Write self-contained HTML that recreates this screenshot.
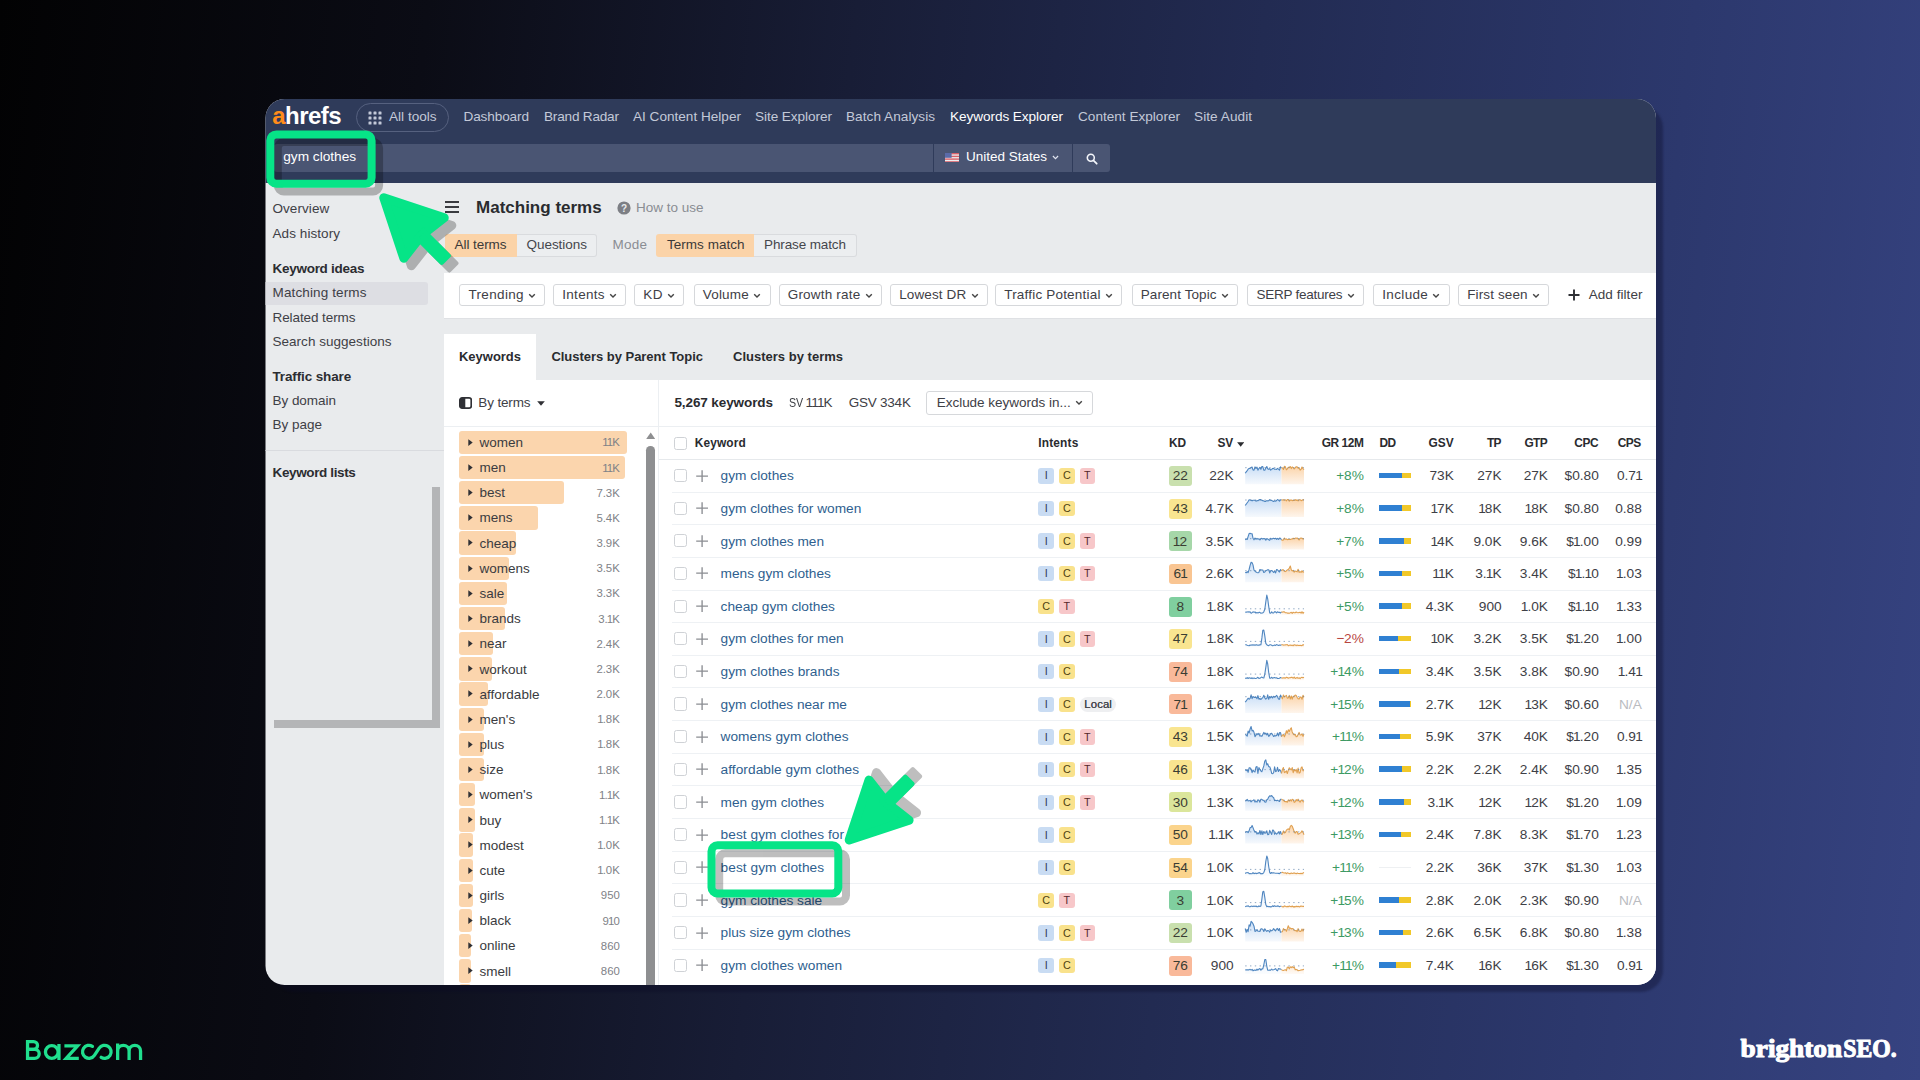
<!DOCTYPE html><html><head><meta charset="utf-8"><title>slide</title><style>
*{box-sizing:border-box;margin:0;padding:0}
html,body{width:1920px;height:1080px;overflow:hidden}
body{font-family:"Liberation Sans",sans-serif;position:relative;
 background:linear-gradient(96.5deg,#020203 0%,#0b0c15 21%,#181d36 42%,#222b52 62%,#2c386d 83%,#364381 100%);}
.abs{position:absolute}
#shadow{position:absolute;left:272px;top:106px;width:1391px;height:886px;border-radius:22px;background:rgba(8,10,35,.33);filter:blur(1.2px)}
#card{position:absolute;left:0;top:0;width:1920px;height:1080px;clip-path:inset(99px 264px 95px 265.5px round 19px);background:#e9ebed}
#hdr{position:absolute;left:265px;top:99px;width:1392px;height:84px;background:#2f3b5a}
.t{position:absolute;white-space:nowrap;line-height:1}
.nav{font-size:13.6px;color:#c3c9d8;top:110px}
.sb{font-size:13.5px;color:#3e4046;left:272.5px}
.o{margin:0 -0.95px 0 -0.85px}
.sbb{font-size:13.5px;color:#2c2d31;left:272.5px;font-weight:bold}
</style></head><body><div id="shadow"></div>
<div id="card">
<div id="hdr"></div>
<div class="t" style="letter-spacing:-0.549px;left:272.3px;top:104.3px;font-size:24px;font-weight:bold;color:#fff"><span style="color:#ff8c1a">a</span>hrefs</div>
<div class="abs" style="left:356px;top:103px;width:93px;height:28.5px;border:1px solid #56617f;border-radius:15px"></div>
<svg class="abs" style="left:368px;top:110.5px" width="14" height="14" viewBox="0 0 14 14" fill="#c3c9d8"><rect x="0.5" y="0.5" width="3" height="3" rx=".6"/><rect x="5.5" y="0.5" width="3" height="3" rx=".6"/><rect x="10.5" y="0.5" width="3" height="3" rx=".6"/><rect x="0.5" y="5.5" width="3" height="3" rx=".6"/><rect x="5.5" y="5.5" width="3" height="3" rx=".6"/><rect x="10.5" y="5.5" width="3" height="3" rx=".6"/><rect x="0.5" y="10.5" width="3" height="3" rx=".6"/><rect x="5.5" y="10.5" width="3" height="3" rx=".6"/><rect x="10.5" y="10.5" width="3" height="3" rx=".6"/></svg>
<div class="t nav" style="left:389px">All tools</div>
<div class="t nav" style="letter-spacing:-0.127px;left:463.5px;color:#c3c9d8">Dashboard</div>
<div class="t nav" style="letter-spacing:-0.208px;left:544px;color:#c3c9d8">Brand Radar</div>
<div class="t nav" style="letter-spacing:-0.004px;left:633px;color:#c3c9d8">AI Content Helper</div>
<div class="t nav" style="letter-spacing:-0.069px;left:755px;color:#c3c9d8">Site Explorer</div>
<div class="t nav" style="letter-spacing:0.046px;left:846px;color:#c3c9d8">Batch Analysis</div>
<div class="t nav" style="letter-spacing:-0.068px;left:950px;color:#fff">Keywords Explorer</div>
<div class="t nav" style="letter-spacing:-0.001px;left:1078px;color:#c3c9d8">Content Explorer</div>
<div class="t nav" style="letter-spacing:0.062px;left:1194px;color:#c3c9d8">Site Audit</div>
<div class="abs" style="left:274px;top:144px;width:659px;height:27.5px;background:#4a5573;border-radius:3px 0 0 3px"></div>
<div class="abs" style="left:934px;top:144px;width:138px;height:27.5px;background:#4a5573"></div>
<div class="abs" style="left:1073px;top:144px;width:37px;height:27.5px;background:#4a5573;border-radius:0 3px 3px 0"></div>
<div class="t" style="letter-spacing:-0.003px;left:283.2px;top:150px;font-size:13.7px;color:#fff">gym clothes</div>
<svg class="abs" style="left:945px;top:152.7px" width="14.2" height="9.6" viewBox="0 0 15 11" preserveAspectRatio="none"><rect width="15" height="11" fill="#eee"/><g fill="#d9606a"><rect y="0" width="15" height="1.6"/><rect y="3.1" width="15" height="1.6"/><rect y="6.2" width="15" height="1.6"/><rect y="9.4" width="15" height="1.6"/></g><rect width="7" height="5.5" fill="#5a6aa8"/></svg>
<div class="t" style="left:966px;top:150px;font-size:13.5px;color:#fff">United States</div>
<svg class="abs" style="left:1052px;top:155.3px" width="7" height="5.2" viewBox="0 0 8 6"><path d="M1 1.2 L4 4.2 L7 1.2" fill="none" stroke="#dfe3ee" stroke-width="1.4"/></svg>
<svg class="abs" style="left:1085.5px;top:152.8px" width="12" height="12" viewBox="0 0 13 13"><circle cx="5.2" cy="5.2" r="3.8" fill="none" stroke="#f3f5fa" stroke-width="1.7"/><path d="M8 8 L11.6 11.6" stroke="#f3f5fa" stroke-width="1.9" stroke-linecap="round"/></svg>
<div class="abs" style="left:265px;top:282px;width:163px;height:23px;background:#dddee3;border-radius:0 3px 3px 0"></div>
<div class="t sb" style="letter-spacing:0.062px;top:202.2px">Overview</div>
<div class="t sb" style="letter-spacing:0.072px;top:227.2px">Ads history</div>
<div class="t sbb" style="letter-spacing:-0.275px;top:261.7px">Keyword ideas</div>
<div class="t sb" style="letter-spacing:0.132px;top:286.2px">Matching terms</div>
<div class="t sb" style="letter-spacing:-0.087px;top:310.7px">Related terms</div>
<div class="t sb" style="letter-spacing:0.025px;top:334.7px">Search suggestions</div>
<div class="t sbb" style="letter-spacing:-0.133px;top:370.2px">Traffic share</div>
<div class="t sb" style="letter-spacing:-0.037px;top:394.2px">By domain</div>
<div class="t sb" style="letter-spacing:-0.008px;top:418.2px">By page</div>
<div class="t sbb" style="letter-spacing:-0.373px;top:466.2px">Keyword lists</div>
<div class="abs" style="left:265px;top:449.5px;width:179px;height:1px;background:#d9dbdf"></div>
<div class="abs" style="left:432px;top:487px;width:8px;height:241px;background:#b4b5b7"></div>
<div class="abs" style="left:274px;top:720px;width:166px;height:8px;background:#b4b5b7"></div>
<div class="abs" style="left:445.30px;top:201.40px;width:13.40px;height:2.00px;background:#3a3b40;"></div>
<div class="abs" style="left:445.30px;top:206.10px;width:13.40px;height:2.00px;background:#3a3b40;"></div>
<div class="abs" style="left:445.30px;top:210.80px;width:13.40px;height:2.00px;background:#3a3b40;"></div>
<div class="t" style="letter-spacing:0.005px;left:476.00px;top:199.31px;font-size:17px;color:#2a2b2f;font-weight:bold;">Matching terms</div>
<svg class="abs" style="left:617px;top:201px" width="14" height="14" viewBox="0 0 14 14"><circle cx="7" cy="7" r="6.6" fill="#7d7f85"/><text x="7" y="10.6" font-family="Liberation Sans" font-weight="bold" font-size="10" fill="#e9ebed" text-anchor="middle">?</text></svg>
<div class="t" style="letter-spacing:-0.005px;left:636.00px;top:200.87px;font-size:13.5px;color:#8a8d93;">How to use</div>
<div class="abs" style="left:444.80px;top:234.00px;width:72.40px;height:22.50px;background:#fbd3a8;border-radius:3px 0 0 3px"></div>
<div class="abs" style="left:517.00px;top:234.00px;width:80.00px;height:22.50px;background:#eceef0;border:1px solid #d9dbde;border-left:none;border-radius:0 3px 3px 0"></div>
<div class="t" style="letter-spacing:-0.064px;left:454.50px;top:237.87px;font-size:13.5px;color:#3c3a38;">All terms</div>
<div class="t" style="letter-spacing:-0.037px;left:526.50px;top:237.87px;font-size:13.5px;color:#44464c;">Questions</div>
<div class="t" style="letter-spacing:0.240px;left:612.50px;top:237.87px;font-size:13.5px;color:#8a8d93;">Mode</div>
<div class="abs" style="left:656.00px;top:234.00px;width:98.40px;height:22.50px;background:#fbd3a8;border-radius:3px 0 0 3px"></div>
<div class="abs" style="left:754.30px;top:234.00px;width:103.00px;height:22.50px;background:#eceef0;border:1px solid #d9dbde;border-left:none;border-radius:0 3px 3px 0"></div>
<div class="t" style="letter-spacing:0.023px;left:667.00px;top:237.87px;font-size:13.5px;color:#3c3a38;">Terms match</div>
<div class="t" style="letter-spacing:-0.118px;left:764.00px;top:237.87px;font-size:13.5px;color:#44464c;">Phrase match</div>
<div class="abs" style="left:443.60px;top:272.70px;width:1213.00px;height:46.30px;background:#ffffff;border-bottom:1px solid #dfe1e4"></div>
<div class="abs" style="left:459.20px;top:283.70px;width:86.20px;height:22.60px;background:#fff;border:1px solid #d6d8db;border-radius:3px"></div>
<div class="t" style="letter-spacing:0.346px;left:468.40px;top:288.17px;font-size:13.5px;color:#3e4046;">Trending</div>
<svg class="abs" style="left:528.1px;top:292.6px" width="8" height="6" viewBox="0 0 8 6"><path d="M1.2 1.3 L4 4.1 L6.8 1.3" fill="none" stroke="#444" stroke-width="1.4"/></svg>
<div class="abs" style="left:553.00px;top:283.70px;width:73.40px;height:22.60px;background:#fff;border:1px solid #d6d8db;border-radius:3px"></div>
<div class="t" style="letter-spacing:0.311px;left:562.20px;top:288.17px;font-size:13.5px;color:#3e4046;">Intents</div>
<svg class="abs" style="left:609.1px;top:292.6px" width="8" height="6" viewBox="0 0 8 6"><path d="M1.2 1.3 L4 4.1 L6.8 1.3" fill="none" stroke="#444" stroke-width="1.4"/></svg>
<div class="abs" style="left:634.00px;top:283.70px;width:50.40px;height:22.60px;background:#fff;border:1px solid #d6d8db;border-radius:3px"></div>
<div class="t" style="letter-spacing:0.634px;left:643.20px;top:288.17px;font-size:13.5px;color:#3e4046;">KD</div>
<svg class="abs" style="left:667.1px;top:292.6px" width="8" height="6" viewBox="0 0 8 6"><path d="M1.2 1.3 L4 4.1 L6.8 1.3" fill="none" stroke="#444" stroke-width="1.4"/></svg>
<div class="abs" style="left:693.50px;top:283.70px;width:77.10px;height:22.60px;background:#fff;border:1px solid #d6d8db;border-radius:3px"></div>
<div class="t" style="letter-spacing:0.214px;left:702.70px;top:288.17px;font-size:13.5px;color:#3e4046;">Volume</div>
<svg class="abs" style="left:753.3px;top:292.6px" width="8" height="6" viewBox="0 0 8 6"><path d="M1.2 1.3 L4 4.1 L6.8 1.3" fill="none" stroke="#444" stroke-width="1.4"/></svg>
<div class="abs" style="left:778.50px;top:283.70px;width:103.50px;height:22.60px;background:#fff;border:1px solid #d6d8db;border-radius:3px"></div>
<div class="t" style="letter-spacing:0.197px;left:787.70px;top:288.17px;font-size:13.5px;color:#3e4046;">Growth rate</div>
<svg class="abs" style="left:864.7px;top:292.6px" width="8" height="6" viewBox="0 0 8 6"><path d="M1.2 1.3 L4 4.1 L6.8 1.3" fill="none" stroke="#444" stroke-width="1.4"/></svg>
<div class="abs" style="left:890.00px;top:283.70px;width:98.00px;height:22.60px;background:#fff;border:1px solid #d6d8db;border-radius:3px"></div>
<div class="t" style="letter-spacing:0.121px;left:899.20px;top:288.17px;font-size:13.5px;color:#3e4046;">Lowest DR</div>
<svg class="abs" style="left:970.7px;top:292.6px" width="8" height="6" viewBox="0 0 8 6"><path d="M1.2 1.3 L4 4.1 L6.8 1.3" fill="none" stroke="#444" stroke-width="1.4"/></svg>
<div class="abs" style="left:995.00px;top:283.70px;width:127.20px;height:22.60px;background:#fff;border:1px solid #d6d8db;border-radius:3px"></div>
<div class="t" style="letter-spacing:0.197px;left:1004.20px;top:288.17px;font-size:13.5px;color:#3e4046;">Traffic Potential</div>
<svg class="abs" style="left:1104.9px;top:292.6px" width="8" height="6" viewBox="0 0 8 6"><path d="M1.2 1.3 L4 4.1 L6.8 1.3" fill="none" stroke="#444" stroke-width="1.4"/></svg>
<div class="abs" style="left:1131.50px;top:283.70px;width:106.90px;height:22.60px;background:#fff;border:1px solid #d6d8db;border-radius:3px"></div>
<div class="t" style="letter-spacing:0.099px;left:1140.70px;top:288.17px;font-size:13.5px;color:#3e4046;">Parent Topic</div>
<svg class="abs" style="left:1221.1px;top:292.6px" width="8" height="6" viewBox="0 0 8 6"><path d="M1.2 1.3 L4 4.1 L6.8 1.3" fill="none" stroke="#444" stroke-width="1.4"/></svg>
<div class="abs" style="left:1247.20px;top:283.70px;width:117.20px;height:22.60px;background:#fff;border:1px solid #d6d8db;border-radius:3px"></div>
<div class="t" style="letter-spacing:-0.239px;left:1256.40px;top:288.17px;font-size:13.5px;color:#3e4046;">SERP features</div>
<svg class="abs" style="left:1347.1px;top:292.6px" width="8" height="6" viewBox="0 0 8 6"><path d="M1.2 1.3 L4 4.1 L6.8 1.3" fill="none" stroke="#444" stroke-width="1.4"/></svg>
<div class="abs" style="left:1373.00px;top:283.70px;width:76.70px;height:22.60px;background:#fff;border:1px solid #d6d8db;border-radius:3px"></div>
<div class="t" style="letter-spacing:0.359px;left:1382.20px;top:288.17px;font-size:13.5px;color:#3e4046;">Include</div>
<svg class="abs" style="left:1432.4px;top:292.6px" width="8" height="6" viewBox="0 0 8 6"><path d="M1.2 1.3 L4 4.1 L6.8 1.3" fill="none" stroke="#444" stroke-width="1.4"/></svg>
<div class="abs" style="left:1458.00px;top:283.70px;width:91.40px;height:22.60px;background:#fff;border:1px solid #d6d8db;border-radius:3px"></div>
<div class="t" style="letter-spacing:0.124px;left:1467.20px;top:288.17px;font-size:13.5px;color:#3e4046;">First seen</div>
<svg class="abs" style="left:1532.1px;top:292.6px" width="8" height="6" viewBox="0 0 8 6"><path d="M1.2 1.3 L4 4.1 L6.8 1.3" fill="none" stroke="#444" stroke-width="1.4"/></svg>
<svg class="abs" style="left:1567.5px;top:289px" width="12" height="12" viewBox="0 0 12 12"><path d="M6 0.5V11.5M0.5 6H11.5" stroke="#2f3035" stroke-width="1.9"/></svg>
<div class="t" style="letter-spacing:0.058px;left:1588.70px;top:288.17px;font-size:13.5px;color:#3e4046;">Add filter</div>
<div class="abs" style="left:443.60px;top:333.80px;width:92.70px;height:46.00px;background:#ffffff;"></div>
<div class="t" style="letter-spacing:-0.020px;left:459.00px;top:349.60px;font-size:13.0px;color:#2a2b2f;font-weight:bold;">Keywords</div>
<div class="t" style="letter-spacing:-0.026px;left:551.40px;top:349.60px;font-size:13.0px;color:#2a2b2f;font-weight:bold;">Clusters by Parent Topic</div>
<div class="t" style="letter-spacing:0.011px;left:733.00px;top:349.60px;font-size:13.0px;color:#2a2b2f;font-weight:bold;">Clusters by terms</div>
<div class="abs" style="left:443.60px;top:379.50px;width:1213.00px;height:606.00px;background:#ffffff;"></div>
<div class="abs" style="left:443.60px;top:425.60px;width:1213.00px;height:1.00px;background:#eceff2;"></div>
<div class="abs" style="left:658.30px;top:379.50px;width:1.00px;height:606.00px;background:#eceff2;"></div>
<svg class="abs" style="left:458.6px;top:396.8px" width="13.2" height="12" viewBox="0 0 13.2 12"><rect x="0.9" y="0.9" width="11.4" height="10.2" rx="2.2" fill="#fff" stroke="#2f3035" stroke-width="1.8"/><path d="M1 2.2 Q1 1 2.2 1 H6.3 V11 H2.2 Q1 11 1 9.8Z" fill="#2f3035"/></svg>
<div class="t" style="letter-spacing:-0.138px;left:478.30px;top:395.77px;font-size:13.5px;color:#3e4046;">By terms</div>
<svg class="abs" style="left:536.6px;top:401px" width="8" height="5" viewBox="0 0 8 5"><path d="M0.2 0.3H7.8L4 4.8Z" fill="#2f3035"/></svg>
<div class="t" style="letter-spacing:-0.094px;left:674.40px;top:395.77px;font-size:13.5px;color:#2a2b2f;font-weight:bold;">5,267 keywords</div>
<div class="t" style="left:789.40px;top:395.77px;font-size:13.5px;color:#3e4046;transform:scaleX(.79);transform-origin:0 0">SV</div>
<div class="t" style="right:1087.40px;top:395.77px;font-size:13.5px;color:#3e4046;"><span class="o">1</span><span class="o">1</span><span class="o">1</span>K</div>
<div class="t" style="letter-spacing:-0.228px;left:848.70px;top:395.77px;font-size:13.5px;color:#3e4046;">GSV 334K</div>
<div class="abs" style="left:925.70px;top:391.30px;width:167.30px;height:23.70px;background:#fff;border:1px solid #d6d8db;border-radius:3px"></div>
<div class="t" style="letter-spacing:-0.015px;left:936.70px;top:395.77px;font-size:13.5px;color:#3e4046;">Exclude keywords in...</div>
<svg class="abs" style="left:1075.2px;top:400px" width="8" height="6" viewBox="0 0 8 6"><path d="M1.2 1.3 L4 4.1 L6.8 1.3" fill="none" stroke="#444" stroke-width="1.4"/></svg>
<div class="abs" style="left:459.00px;top:430.70px;width:168.20px;height:23.30px;background:#fbd5ad;border-radius:3px"></div>
<svg class="abs" style="left:468px;top:438.70px" width="5" height="7.2" viewBox="0 0 5 7.2"><path d="M0.3 0.2V7L4.7 3.6Z" fill="#2f3035"/></svg>
<div class="t" style="left:479.60px;top:435.97px;font-size:13.5px;color:#3a3b40;">women</div>
<div class="t" style="right:1300.20px;top:437.35px;font-size:11.4px;color:#808287;"><span class="o">1</span><span class="o">1</span>K</div>
<div class="abs" style="left:459.00px;top:455.87px;width:165.80px;height:23.30px;background:#fbd5ad;border-radius:3px"></div>
<svg class="abs" style="left:468px;top:463.87px" width="5" height="7.2" viewBox="0 0 5 7.2"><path d="M0.3 0.2V7L4.7 3.6Z" fill="#2f3035"/></svg>
<div class="t" style="left:479.60px;top:461.14px;font-size:13.5px;color:#3a3b40;">men</div>
<div class="t" style="right:1300.20px;top:462.52px;font-size:11.4px;color:#808287;"><span class="o">1</span><span class="o">1</span>K</div>
<div class="abs" style="left:459.00px;top:481.04px;width:105.30px;height:23.30px;background:#fbd5ad;border-radius:3px"></div>
<svg class="abs" style="left:468px;top:489.04px" width="5" height="7.2" viewBox="0 0 5 7.2"><path d="M0.3 0.2V7L4.7 3.6Z" fill="#2f3035"/></svg>
<div class="t" style="left:479.60px;top:486.31px;font-size:13.5px;color:#3a3b40;">best</div>
<div class="t" style="right:1300.20px;top:487.69px;font-size:11.4px;color:#808287;">7.3K</div>
<div class="abs" style="left:459.00px;top:506.21px;width:78.70px;height:23.30px;background:#fbd5ad;border-radius:3px"></div>
<svg class="abs" style="left:468px;top:514.21px" width="5" height="7.2" viewBox="0 0 5 7.2"><path d="M0.3 0.2V7L4.7 3.6Z" fill="#2f3035"/></svg>
<div class="t" style="left:479.60px;top:511.48px;font-size:13.5px;color:#3a3b40;">mens</div>
<div class="t" style="right:1300.20px;top:512.86px;font-size:11.4px;color:#808287;">5.4K</div>
<div class="abs" style="left:459.00px;top:531.38px;width:57.00px;height:23.30px;background:#fbd5ad;border-radius:3px"></div>
<svg class="abs" style="left:468px;top:539.38px" width="5" height="7.2" viewBox="0 0 5 7.2"><path d="M0.3 0.2V7L4.7 3.6Z" fill="#2f3035"/></svg>
<div class="t" style="left:479.60px;top:536.65px;font-size:13.5px;color:#3a3b40;">cheap</div>
<div class="t" style="right:1300.20px;top:538.03px;font-size:11.4px;color:#808287;">3.9K</div>
<div class="abs" style="left:459.00px;top:556.55px;width:50.30px;height:23.30px;background:#fbd5ad;border-radius:3px"></div>
<svg class="abs" style="left:468px;top:564.55px" width="5" height="7.2" viewBox="0 0 5 7.2"><path d="M0.3 0.2V7L4.7 3.6Z" fill="#2f3035"/></svg>
<div class="t" style="left:479.60px;top:561.82px;font-size:13.5px;color:#3a3b40;">womens</div>
<div class="t" style="right:1300.20px;top:563.20px;font-size:11.4px;color:#808287;">3.5K</div>
<div class="abs" style="left:459.00px;top:581.72px;width:48.30px;height:23.30px;background:#fbd5ad;border-radius:3px"></div>
<svg class="abs" style="left:468px;top:589.72px" width="5" height="7.2" viewBox="0 0 5 7.2"><path d="M0.3 0.2V7L4.7 3.6Z" fill="#2f3035"/></svg>
<div class="t" style="left:479.60px;top:586.99px;font-size:13.5px;color:#3a3b40;">sale</div>
<div class="t" style="right:1300.20px;top:588.37px;font-size:11.4px;color:#808287;">3.3K</div>
<div class="abs" style="left:459.00px;top:606.89px;width:46.00px;height:23.30px;background:#fbd5ad;border-radius:3px"></div>
<svg class="abs" style="left:468px;top:614.89px" width="5" height="7.2" viewBox="0 0 5 7.2"><path d="M0.3 0.2V7L4.7 3.6Z" fill="#2f3035"/></svg>
<div class="t" style="left:479.60px;top:612.16px;font-size:13.5px;color:#3a3b40;">brands</div>
<div class="t" style="right:1300.20px;top:613.54px;font-size:11.4px;color:#808287;">3.<span class="o">1</span>K</div>
<div class="abs" style="left:459.00px;top:632.06px;width:33.70px;height:23.30px;background:#fbd5ad;border-radius:3px"></div>
<svg class="abs" style="left:468px;top:640.06px" width="5" height="7.2" viewBox="0 0 5 7.2"><path d="M0.3 0.2V7L4.7 3.6Z" fill="#2f3035"/></svg>
<div class="t" style="left:479.60px;top:637.33px;font-size:13.5px;color:#3a3b40;">near</div>
<div class="t" style="right:1300.20px;top:638.71px;font-size:11.4px;color:#808287;">2.4K</div>
<div class="abs" style="left:459.00px;top:657.23px;width:32.70px;height:23.30px;background:#fbd5ad;border-radius:3px"></div>
<svg class="abs" style="left:468px;top:665.23px" width="5" height="7.2" viewBox="0 0 5 7.2"><path d="M0.3 0.2V7L4.7 3.6Z" fill="#2f3035"/></svg>
<div class="t" style="left:479.60px;top:662.50px;font-size:13.5px;color:#3a3b40;">workout</div>
<div class="t" style="right:1300.20px;top:663.88px;font-size:11.4px;color:#808287;">2.3K</div>
<div class="abs" style="left:459.00px;top:682.40px;width:29.30px;height:23.30px;background:#fbd5ad;border-radius:3px"></div>
<svg class="abs" style="left:468px;top:690.40px" width="5" height="7.2" viewBox="0 0 5 7.2"><path d="M0.3 0.2V7L4.7 3.6Z" fill="#2f3035"/></svg>
<div class="t" style="left:479.60px;top:687.67px;font-size:13.5px;color:#3a3b40;">affordable</div>
<div class="t" style="right:1300.20px;top:689.05px;font-size:11.4px;color:#808287;">2.0K</div>
<div class="abs" style="left:459.00px;top:707.57px;width:25.30px;height:23.30px;background:#fbd5ad;border-radius:3px"></div>
<svg class="abs" style="left:468px;top:715.57px" width="5" height="7.2" viewBox="0 0 5 7.2"><path d="M0.3 0.2V7L4.7 3.6Z" fill="#2f3035"/></svg>
<div class="t" style="left:479.60px;top:712.84px;font-size:13.5px;color:#3a3b40;">men's</div>
<div class="t" style="right:1300.20px;top:714.22px;font-size:11.4px;color:#808287;"><span class="o">1</span>.8K</div>
<div class="abs" style="left:459.00px;top:732.74px;width:25.30px;height:23.30px;background:#fbd5ad;border-radius:3px"></div>
<svg class="abs" style="left:468px;top:740.74px" width="5" height="7.2" viewBox="0 0 5 7.2"><path d="M0.3 0.2V7L4.7 3.6Z" fill="#2f3035"/></svg>
<div class="t" style="left:479.60px;top:738.01px;font-size:13.5px;color:#3a3b40;">plus</div>
<div class="t" style="right:1300.20px;top:739.39px;font-size:11.4px;color:#808287;"><span class="o">1</span>.8K</div>
<div class="abs" style="left:459.00px;top:757.91px;width:25.30px;height:23.30px;background:#fbd5ad;border-radius:3px"></div>
<svg class="abs" style="left:468px;top:765.91px" width="5" height="7.2" viewBox="0 0 5 7.2"><path d="M0.3 0.2V7L4.7 3.6Z" fill="#2f3035"/></svg>
<div class="t" style="left:479.60px;top:763.18px;font-size:13.5px;color:#3a3b40;">size</div>
<div class="t" style="right:1300.20px;top:764.56px;font-size:11.4px;color:#808287;"><span class="o">1</span>.8K</div>
<div class="abs" style="left:459.00px;top:783.08px;width:16.30px;height:23.30px;background:#fbd5ad;border-radius:3px"></div>
<svg class="abs" style="left:468px;top:791.08px" width="5" height="7.2" viewBox="0 0 5 7.2"><path d="M0.3 0.2V7L4.7 3.6Z" fill="#2f3035"/></svg>
<div class="t" style="left:479.60px;top:788.35px;font-size:13.5px;color:#3a3b40;">women's</div>
<div class="t" style="right:1300.20px;top:789.73px;font-size:11.4px;color:#808287;"><span class="o">1</span>.<span class="o">1</span>K</div>
<div class="abs" style="left:459.00px;top:808.25px;width:16.00px;height:23.30px;background:#fbd5ad;border-radius:3px"></div>
<svg class="abs" style="left:468px;top:816.25px" width="5" height="7.2" viewBox="0 0 5 7.2"><path d="M0.3 0.2V7L4.7 3.6Z" fill="#2f3035"/></svg>
<div class="t" style="left:479.60px;top:813.52px;font-size:13.5px;color:#3a3b40;">buy</div>
<div class="t" style="right:1300.20px;top:814.90px;font-size:11.4px;color:#808287;"><span class="o">1</span>.<span class="o">1</span>K</div>
<div class="abs" style="left:459.00px;top:833.42px;width:14.30px;height:23.30px;background:#fbd5ad;border-radius:3px"></div>
<svg class="abs" style="left:468px;top:841.42px" width="5" height="7.2" viewBox="0 0 5 7.2"><path d="M0.3 0.2V7L4.7 3.6Z" fill="#2f3035"/></svg>
<div class="t" style="left:479.60px;top:838.69px;font-size:13.5px;color:#3a3b40;">modest</div>
<div class="t" style="right:1300.20px;top:840.07px;font-size:11.4px;color:#808287;"><span class="o">1</span>.0K</div>
<div class="abs" style="left:459.00px;top:858.59px;width:14.30px;height:23.30px;background:#fbd5ad;border-radius:3px"></div>
<svg class="abs" style="left:468px;top:866.59px" width="5" height="7.2" viewBox="0 0 5 7.2"><path d="M0.3 0.2V7L4.7 3.6Z" fill="#2f3035"/></svg>
<div class="t" style="left:479.60px;top:863.86px;font-size:13.5px;color:#3a3b40;">cute</div>
<div class="t" style="right:1300.20px;top:865.24px;font-size:11.4px;color:#808287;"><span class="o">1</span>.0K</div>
<div class="abs" style="left:459.00px;top:883.76px;width:13.50px;height:23.30px;background:#fbd5ad;border-radius:3px"></div>
<svg class="abs" style="left:468px;top:891.76px" width="5" height="7.2" viewBox="0 0 5 7.2"><path d="M0.3 0.2V7L4.7 3.6Z" fill="#2f3035"/></svg>
<div class="t" style="left:479.60px;top:889.03px;font-size:13.5px;color:#3a3b40;">girls</div>
<div class="t" style="right:1300.20px;top:890.41px;font-size:11.4px;color:#808287;">950</div>
<div class="abs" style="left:459.00px;top:908.93px;width:13.00px;height:23.30px;background:#fbd5ad;border-radius:3px"></div>
<svg class="abs" style="left:468px;top:916.93px" width="5" height="7.2" viewBox="0 0 5 7.2"><path d="M0.3 0.2V7L4.7 3.6Z" fill="#2f3035"/></svg>
<div class="t" style="left:479.60px;top:914.20px;font-size:13.5px;color:#3a3b40;">black</div>
<div class="t" style="right:1300.20px;top:915.58px;font-size:11.4px;color:#808287;">9<span class="o">1</span>0</div>
<div class="abs" style="left:459.00px;top:934.10px;width:12.00px;height:23.30px;background:#fbd5ad;border-radius:3px"></div>
<svg class="abs" style="left:468px;top:942.10px" width="5" height="7.2" viewBox="0 0 5 7.2"><path d="M0.3 0.2V7L4.7 3.6Z" fill="#2f3035"/></svg>
<div class="t" style="left:479.60px;top:939.37px;font-size:13.5px;color:#3a3b40;">online</div>
<div class="t" style="right:1300.20px;top:940.75px;font-size:11.4px;color:#808287;">860</div>
<div class="abs" style="left:459.00px;top:959.27px;width:12.00px;height:23.30px;background:#fbd5ad;border-radius:3px"></div>
<svg class="abs" style="left:468px;top:967.27px" width="5" height="7.2" viewBox="0 0 5 7.2"><path d="M0.3 0.2V7L4.7 3.6Z" fill="#2f3035"/></svg>
<div class="t" style="left:479.60px;top:964.54px;font-size:13.5px;color:#3a3b40;">smell</div>
<div class="t" style="right:1300.20px;top:965.92px;font-size:11.4px;color:#808287;">860</div>
<div class="abs" style="left:459.00px;top:984.44px;width:11.50px;height:23.30px;background:#fbd5ad;border-radius:3px"></div>
<svg class="abs" style="left:645.6px;top:432.4px" width="9.4" height="7.2" viewBox="0 0 9.4 7.2"><path d="M4.7 0.4L9.2 7H0.2Z" fill="#8e8f91"/></svg>
<div class="abs" style="left:646.20px;top:446.00px;width:8.60px;height:545.00px;background:#8e8f91;border-radius:4.3px"></div>
<div class="abs" style="left:673.80px;top:437.00px;width:13.20px;height:13.20px;background:#fff;border:1px solid #cfd2d6;border-radius:2.5px"></div>
<div class="t" style="letter-spacing:0.130px;left:694.70px;top:437.93px;font-size:11.9px;color:#2a2b2f;font-weight:bold;">Keyword</div>
<div class="t" style="letter-spacing:0.169px;left:1038.30px;top:437.93px;font-size:11.9px;color:#2a2b2f;font-weight:bold;">Intents</div>
<div class="t" style="letter-spacing:0.012px;left:1168.90px;top:437.93px;font-size:11.9px;color:#2a2b2f;font-weight:bold;">KD</div>
<div class="t" style="letter-spacing:-0.075px;left:1217.50px;top:437.93px;font-size:11.9px;color:#2a2b2f;font-weight:bold;">SV</div>
<svg class="abs" style="left:1236.6px;top:442px" width="7.4" height="5" viewBox="0 0 7.4 5"><path d="M0.1 0.2H7.3L3.7 4.8Z" fill="#2a2b2f"/></svg>
<div class="t" style="letter-spacing:-0.416px;left:1321.70px;top:437.93px;font-size:11.9px;color:#2a2b2f;font-weight:bold;">GR 12M</div>
<div class="t" style="letter-spacing:-0.488px;left:1379.40px;top:437.93px;font-size:11.9px;color:#2a2b2f;font-weight:bold;">DD</div>
<div class="t" style="letter-spacing:-0.062px;left:1428.60px;top:437.93px;font-size:11.9px;color:#2a2b2f;font-weight:bold;">GSV</div>
<div class="t" style="letter-spacing:-0.803px;left:1487.00px;top:437.93px;font-size:11.9px;color:#2a2b2f;font-weight:bold;">TP</div>
<div class="t" style="letter-spacing:-0.527px;left:1524.40px;top:437.93px;font-size:11.9px;color:#2a2b2f;font-weight:bold;">GTP</div>
<div class="t" style="letter-spacing:-0.355px;left:1574.20px;top:437.93px;font-size:11.9px;color:#2a2b2f;font-weight:bold;">CPC</div>
<div class="t" style="letter-spacing:-0.577px;left:1617.80px;top:437.93px;font-size:11.9px;color:#2a2b2f;font-weight:bold;">CPS</div>
<div class="abs" style="left:659.00px;top:458.90px;width:997.00px;height:1.00px;background:#e6e9ec;"></div>
<svg width="0" height="0" style="position:absolute"><defs><linearGradient id="gb" x1="0" y1="0" x2="0" y2="1"><stop offset="0" stop-color="#c9def6"/><stop offset="1" stop-color="#f6f9fd"/></linearGradient><linearGradient id="go" x1="0" y1="0" x2="0" y2="1"><stop offset="0" stop-color="#fbd4aa"/><stop offset="1" stop-color="#fef5ec"/></linearGradient></defs></svg>
<div class="abs" style="left:672.00px;top:491.55px;width:984.00px;height:1.00px;background:#eef1f4;"></div>
<div class="abs" style="left:673.80px;top:468.92px;width:13.20px;height:13.20px;background:#fff;border:1px solid #cfd2d6;border-radius:2.5px"></div>
<svg class="abs" style="left:696.3px;top:469.52px" width="12.2" height="12.2" viewBox="0 0 12.2 12.2"><path d="M6.1 0.2V12M0.2 6.1H12" stroke="#8b8d92" stroke-width="1.35"/></svg>
<div class="t" style="letter-spacing:0.017px;left:720.60px;top:469.23px;font-size:13.7px;color:#2f5f8f;">gym clothes</div>
<div class="abs" style="left:1038.30px;top:468.12px;width:15.80px;height:15.40px;background:#c9dcf3;border-radius:3px"></div>
<div class="t" style="left:1038.30px;width:15.8px;text-align:center;top:470.42px;font-size:10.8px;color:#2f3b52">I</div>
<div class="abs" style="left:1058.90px;top:468.12px;width:15.80px;height:15.40px;background:#f9e28c;border-radius:3px"></div>
<div class="t" style="left:1058.90px;width:15.8px;text-align:center;top:470.42px;font-size:10.8px;color:#4f4210">C</div>
<div class="abs" style="left:1079.50px;top:468.12px;width:15.80px;height:15.40px;background:#f7c7c9;border-radius:3px"></div>
<div class="t" style="left:1079.50px;width:15.8px;text-align:center;top:470.42px;font-size:10.8px;color:#55282b">T</div>
<div class="abs" style="left:1168.90px;top:465.92px;width:22.80px;height:20.00px;background:#c9e0ae;border-radius:3px"></div>
<div class="t" style="left:1168.9px;width:22.8px;text-align:center;top:469.23px;font-size:13.7px;color:#3a3d33">22</div>
<div class="t" style="right:686.40px;top:469.23px;font-size:13.7px;color:#3e4046;">22K</div>
<svg class="abs" style="left:0;top:0;overflow:visible" width="1" height="1"><path d="M1245.2 473.3 L1246.2 471.9 L1247.2 470.6 L1248.1 469.2 L1249.1 468.3 L1250.1 468.4 L1251.1 467.6 L1252.1 467.1 L1253.0 469.9 L1254.0 470.1 L1255.0 466.9 L1256.0 468.5 L1257.0 467.2 L1257.9 470.2 L1258.9 468.5 L1259.9 467.4 L1260.9 469.3 L1261.9 466.5 L1262.8 466.6 L1263.8 470.1 L1264.8 470.2 L1265.8 468.1 L1266.8 466.5 L1267.7 468.7 L1268.7 469.4 L1269.7 468.6 L1270.7 470.1 L1271.7 469.4 L1272.6 468.5 L1273.6 468.3 L1274.6 469.3 L1275.6 469.3 L1276.6 469.4 L1277.5 468.4 L1278.5 469.1 L1279.5 470.2 L1280.5 466.9 L1281.5 468.0 L1281.5 484.3 L1245.2 484.3Z" fill="url(#gb)" opacity="1"/><path d="M1281.5 468.0 L1282.4 467.7 L1283.4 469.5 L1284.4 466.3 L1285.4 466.8 L1286.4 469.8 L1287.3 468.9 L1288.3 467.4 L1289.3 467.4 L1290.3 466.5 L1291.3 468.6 L1292.2 466.9 L1293.2 467.6 L1294.2 469.0 L1295.2 467.9 L1296.2 466.7 L1297.1 466.9 L1298.1 468.2 L1299.1 467.9 L1300.1 470.1 L1301.1 469.3 L1302.0 467.0 L1303.0 468.6 L1304.0 469.6 L1304.0 484.3 L1281.5 484.3Z" fill="url(#go)" opacity="1"/><path d="M1245.2 473.3 L1246.2 471.9 L1247.2 470.6 L1248.1 469.2 L1249.1 468.3 L1250.1 468.4 L1251.1 467.6 L1252.1 467.1 L1253.0 469.9 L1254.0 470.1 L1255.0 466.9 L1256.0 468.5 L1257.0 467.2 L1257.9 470.2 L1258.9 468.5 L1259.9 467.4 L1260.9 469.3 L1261.9 466.5 L1262.8 466.6 L1263.8 470.1 L1264.8 470.2 L1265.8 468.1 L1266.8 466.5 L1267.7 468.7 L1268.7 469.4 L1269.7 468.6 L1270.7 470.1 L1271.7 469.4 L1272.6 468.5 L1273.6 468.3 L1274.6 469.3 L1275.6 469.3 L1276.6 469.4 L1277.5 468.4 L1278.5 469.1 L1279.5 470.2 L1280.5 466.9 L1281.5 468.0" fill="none" stroke="#4f86c0" stroke-width="1.1" stroke-linejoin="round"/><path d="M1281.5 468.0 L1282.4 467.7 L1283.4 469.5 L1284.4 466.3 L1285.4 466.8 L1286.4 469.8 L1287.3 468.9 L1288.3 467.4 L1289.3 467.4 L1290.3 466.5 L1291.3 468.6 L1292.2 466.9 L1293.2 467.6 L1294.2 469.0 L1295.2 467.9 L1296.2 466.7 L1297.1 466.9 L1298.1 468.2 L1299.1 467.9 L1300.1 470.1 L1301.1 469.3 L1302.0 467.0 L1303.0 468.6 L1304.0 469.6" fill="none" stroke="#e0a050" stroke-width="1.1" stroke-linejoin="round"/><path d="M1245.2 467.7H1304.0" stroke="#5b7fa8" stroke-width="0.9" stroke-dasharray="1.4 3.4" opacity=".75"/></svg>
<div class="t" style="right:556.10px;top:469.23px;font-size:13.7px;color:#3d9a63;">+8%</div>
<div class="abs" style="left:1379.40px;top:472.62px;width:23.04px;height:5.60px;background:#2f80d2;"></div>
<div class="abs" style="left:1402.44px;top:472.62px;width:8.96px;height:5.60px;background:#f1c829;"></div>
<div class="t" style="right:466.20px;top:469.23px;font-size:13.7px;color:#3e4046;">73K</div>
<div class="t" style="right:418.40px;top:469.23px;font-size:13.7px;color:#3e4046;">27K</div>
<div class="t" style="right:372.00px;top:469.23px;font-size:13.7px;color:#3e4046;">27K</div>
<div class="t" style="right:321.20px;top:469.23px;font-size:13.7px;color:#3e4046;">$0.80</div>
<div class="t" style="right:278.20px;top:469.23px;font-size:13.7px;color:#3e4046;">0.7<span class="o">1</span></div>
<div class="abs" style="left:672.00px;top:524.20px;width:984.00px;height:1.00px;background:#eef1f4;"></div>
<div class="abs" style="left:673.80px;top:501.57px;width:13.20px;height:13.20px;background:#fff;border:1px solid #cfd2d6;border-radius:2.5px"></div>
<svg class="abs" style="left:696.3px;top:502.18px" width="12.2" height="12.2" viewBox="0 0 12.2 12.2"><path d="M6.1 0.2V12M0.2 6.1H12" stroke="#8b8d92" stroke-width="1.35"/></svg>
<div class="t" style="letter-spacing:-0.002px;left:720.60px;top:501.88px;font-size:13.7px;color:#2f5f8f;">gym clothes for women</div>
<div class="abs" style="left:1038.30px;top:500.77px;width:15.80px;height:15.40px;background:#c9dcf3;border-radius:3px"></div>
<div class="t" style="left:1038.30px;width:15.8px;text-align:center;top:503.07px;font-size:10.8px;color:#2f3b52">I</div>
<div class="abs" style="left:1058.90px;top:500.77px;width:15.80px;height:15.40px;background:#f9e28c;border-radius:3px"></div>
<div class="t" style="left:1058.90px;width:15.8px;text-align:center;top:503.07px;font-size:10.8px;color:#4f4210">C</div>
<div class="abs" style="left:1168.90px;top:498.57px;width:22.80px;height:20.00px;background:#f9e590;border-radius:3px"></div>
<div class="t" style="left:1168.9px;width:22.8px;text-align:center;top:501.88px;font-size:13.7px;color:#3a3d33">43</div>
<div class="t" style="right:686.40px;top:501.88px;font-size:13.7px;color:#3e4046;">4.7K</div>
<svg class="abs" style="left:0;top:0;overflow:visible" width="1" height="1"><path d="M1245.2 505.5 L1246.2 504.2 L1247.2 502.8 L1248.1 501.5 L1249.1 499.8 L1250.1 500.0 L1251.1 500.2 L1252.1 500.9 L1253.0 500.3 L1254.0 500.3 L1255.0 500.3 L1256.0 501.2 L1257.0 500.6 L1257.9 500.7 L1258.9 500.0 L1259.9 499.5 L1260.9 499.6 L1261.9 500.4 L1262.8 500.6 L1263.8 501.0 L1264.8 501.4 L1265.8 501.4 L1266.8 500.6 L1267.7 500.9 L1268.7 500.7 L1269.7 499.7 L1270.7 500.4 L1271.7 500.4 L1272.6 501.0 L1273.6 501.5 L1274.6 500.8 L1275.6 501.2 L1276.6 500.5 L1277.5 499.5 L1278.5 500.1 L1279.5 501.1 L1280.5 499.7 L1281.5 499.9 L1281.5 517.0 L1245.2 517.0Z" fill="url(#gb)" opacity="1"/><path d="M1281.5 499.9 L1282.4 500.0 L1283.4 499.7 L1284.4 500.0 L1285.4 499.9 L1286.4 500.8 L1287.3 499.5 L1288.3 499.6 L1289.3 501.2 L1290.3 500.0 L1291.3 500.1 L1292.2 500.6 L1293.2 500.4 L1294.2 500.5 L1295.2 499.6 L1296.2 500.5 L1297.1 499.8 L1298.1 500.8 L1299.1 499.7 L1300.1 499.7 L1301.1 500.6 L1302.0 500.4 L1303.0 499.6 L1304.0 500.0 L1304.0 517.0 L1281.5 517.0Z" fill="url(#go)" opacity="1"/><path d="M1245.2 505.5 L1246.2 504.2 L1247.2 502.8 L1248.1 501.5 L1249.1 499.8 L1250.1 500.0 L1251.1 500.2 L1252.1 500.9 L1253.0 500.3 L1254.0 500.3 L1255.0 500.3 L1256.0 501.2 L1257.0 500.6 L1257.9 500.7 L1258.9 500.0 L1259.9 499.5 L1260.9 499.6 L1261.9 500.4 L1262.8 500.6 L1263.8 501.0 L1264.8 501.4 L1265.8 501.4 L1266.8 500.6 L1267.7 500.9 L1268.7 500.7 L1269.7 499.7 L1270.7 500.4 L1271.7 500.4 L1272.6 501.0 L1273.6 501.5 L1274.6 500.8 L1275.6 501.2 L1276.6 500.5 L1277.5 499.5 L1278.5 500.1 L1279.5 501.1 L1280.5 499.7 L1281.5 499.9" fill="none" stroke="#4f86c0" stroke-width="1.1" stroke-linejoin="round"/><path d="M1281.5 499.9 L1282.4 500.0 L1283.4 499.7 L1284.4 500.0 L1285.4 499.9 L1286.4 500.8 L1287.3 499.5 L1288.3 499.6 L1289.3 501.2 L1290.3 500.0 L1291.3 500.1 L1292.2 500.6 L1293.2 500.4 L1294.2 500.5 L1295.2 499.6 L1296.2 500.5 L1297.1 499.8 L1298.1 500.8 L1299.1 499.7 L1300.1 499.7 L1301.1 500.6 L1302.0 500.4 L1303.0 499.6 L1304.0 500.0" fill="none" stroke="#e0a050" stroke-width="1.1" stroke-linejoin="round"/><path d="M1245.2 500.0H1304.0" stroke="#5b7fa8" stroke-width="0.9" stroke-dasharray="1.4 3.4" opacity=".75"/></svg>
<div class="t" style="right:556.10px;top:501.88px;font-size:13.7px;color:#3d9a63;">+8%</div>
<div class="abs" style="left:1379.40px;top:505.27px;width:22.40px;height:5.60px;background:#2f80d2;"></div>
<div class="abs" style="left:1401.80px;top:505.27px;width:9.60px;height:5.60px;background:#f1c829;"></div>
<div class="t" style="right:466.20px;top:501.88px;font-size:13.7px;color:#3e4046;"><span class="o">1</span>7K</div>
<div class="t" style="right:418.40px;top:501.88px;font-size:13.7px;color:#3e4046;"><span class="o">1</span>8K</div>
<div class="t" style="right:372.00px;top:501.88px;font-size:13.7px;color:#3e4046;"><span class="o">1</span>8K</div>
<div class="t" style="right:321.20px;top:501.88px;font-size:13.7px;color:#3e4046;">$0.80</div>
<div class="t" style="right:278.20px;top:501.88px;font-size:13.7px;color:#3e4046;">0.88</div>
<div class="abs" style="left:672.00px;top:556.85px;width:984.00px;height:1.00px;background:#eef1f4;"></div>
<div class="abs" style="left:673.80px;top:534.23px;width:13.20px;height:13.20px;background:#fff;border:1px solid #cfd2d6;border-radius:2.5px"></div>
<svg class="abs" style="left:696.3px;top:534.82px" width="12.2" height="12.2" viewBox="0 0 12.2 12.2"><path d="M6.1 0.2V12M0.2 6.1H12" stroke="#8b8d92" stroke-width="1.35"/></svg>
<div class="t" style="letter-spacing:0.002px;left:720.60px;top:534.53px;font-size:13.7px;color:#2f5f8f;">gym clothes men</div>
<div class="abs" style="left:1038.30px;top:533.42px;width:15.80px;height:15.40px;background:#c9dcf3;border-radius:3px"></div>
<div class="t" style="left:1038.30px;width:15.8px;text-align:center;top:535.73px;font-size:10.8px;color:#2f3b52">I</div>
<div class="abs" style="left:1058.90px;top:533.42px;width:15.80px;height:15.40px;background:#f9e28c;border-radius:3px"></div>
<div class="t" style="left:1058.90px;width:15.8px;text-align:center;top:535.73px;font-size:10.8px;color:#4f4210">C</div>
<div class="abs" style="left:1079.50px;top:533.42px;width:15.80px;height:15.40px;background:#f7c7c9;border-radius:3px"></div>
<div class="t" style="left:1079.50px;width:15.8px;text-align:center;top:535.73px;font-size:10.8px;color:#55282b">T</div>
<div class="abs" style="left:1168.90px;top:531.23px;width:22.80px;height:20.00px;background:#a6d7a9;border-radius:3px"></div>
<div class="t" style="left:1168.9px;width:22.8px;text-align:center;top:534.53px;font-size:13.7px;color:#3a3d33"><span class="o">1</span>2</div>
<div class="t" style="right:686.40px;top:534.53px;font-size:13.7px;color:#3e4046;">3.5K</div>
<svg class="abs" style="left:0;top:0;overflow:visible" width="1" height="1"><path d="M1245.2 539.8 L1246.2 539.1 L1247.2 539.5 L1248.1 536.7 L1249.1 533.6 L1250.1 533.3 L1251.1 533.7 L1252.1 533.7 L1253.0 538.3 L1254.0 539.8 L1255.0 538.0 L1256.0 539.2 L1257.0 538.4 L1257.9 539.2 L1258.9 538.8 L1259.9 540.0 L1260.9 538.8 L1261.9 538.3 L1262.8 539.1 L1263.8 538.6 L1264.8 538.8 L1265.8 540.2 L1266.8 538.6 L1267.7 539.0 L1268.7 539.7 L1269.7 540.3 L1270.7 538.3 L1271.7 539.2 L1272.6 538.6 L1273.6 538.3 L1274.6 538.7 L1275.6 538.2 L1276.6 539.4 L1277.5 538.4 L1278.5 539.3 L1279.5 538.1 L1280.5 538.3 L1281.5 540.1 L1281.5 549.6 L1245.2 549.6Z" fill="url(#gb)" opacity="1"/><path d="M1281.5 540.1 L1282.4 540.1 L1283.4 539.9 L1284.4 538.1 L1285.4 539.3 L1286.4 538.9 L1287.3 539.7 L1288.3 539.2 L1289.3 539.4 L1290.3 539.5 L1291.3 539.0 L1292.2 539.0 L1293.2 538.2 L1294.2 538.7 L1295.2 538.1 L1296.2 538.3 L1297.1 538.0 L1298.1 538.8 L1299.1 540.0 L1300.1 538.3 L1301.1 538.1 L1302.0 538.2 L1303.0 539.0 L1304.0 538.7 L1304.0 549.6 L1281.5 549.6Z" fill="url(#go)" opacity="1"/><path d="M1245.2 539.8 L1246.2 539.1 L1247.2 539.5 L1248.1 536.7 L1249.1 533.6 L1250.1 533.3 L1251.1 533.7 L1252.1 533.7 L1253.0 538.3 L1254.0 539.8 L1255.0 538.0 L1256.0 539.2 L1257.0 538.4 L1257.9 539.2 L1258.9 538.8 L1259.9 540.0 L1260.9 538.8 L1261.9 538.3 L1262.8 539.1 L1263.8 538.6 L1264.8 538.8 L1265.8 540.2 L1266.8 538.6 L1267.7 539.0 L1268.7 539.7 L1269.7 540.3 L1270.7 538.3 L1271.7 539.2 L1272.6 538.6 L1273.6 538.3 L1274.6 538.7 L1275.6 538.2 L1276.6 539.4 L1277.5 538.4 L1278.5 539.3 L1279.5 538.1 L1280.5 538.3 L1281.5 540.1" fill="none" stroke="#4f86c0" stroke-width="1.1" stroke-linejoin="round"/><path d="M1281.5 540.1 L1282.4 540.1 L1283.4 539.9 L1284.4 538.1 L1285.4 539.3 L1286.4 538.9 L1287.3 539.7 L1288.3 539.2 L1289.3 539.4 L1290.3 539.5 L1291.3 539.0 L1292.2 539.0 L1293.2 538.2 L1294.2 538.7 L1295.2 538.1 L1296.2 538.3 L1297.1 538.0 L1298.1 538.8 L1299.1 540.0 L1300.1 538.3 L1301.1 538.1 L1302.0 538.2 L1303.0 539.0 L1304.0 538.7" fill="none" stroke="#e0a050" stroke-width="1.1" stroke-linejoin="round"/><path d="M1245.2 538.7H1304.0" stroke="#5b7fa8" stroke-width="0.9" stroke-dasharray="1.4 3.4" opacity=".75"/></svg>
<div class="t" style="right:556.10px;top:534.53px;font-size:13.7px;color:#3d9a63;">+7%</div>
<div class="abs" style="left:1379.40px;top:537.92px;width:24.96px;height:5.60px;background:#2f80d2;"></div>
<div class="abs" style="left:1404.36px;top:537.92px;width:7.04px;height:5.60px;background:#f1c829;"></div>
<div class="t" style="right:466.20px;top:534.53px;font-size:13.7px;color:#3e4046;"><span class="o">1</span>4K</div>
<div class="t" style="right:418.40px;top:534.53px;font-size:13.7px;color:#3e4046;">9.0K</div>
<div class="t" style="right:372.00px;top:534.53px;font-size:13.7px;color:#3e4046;">9.6K</div>
<div class="t" style="right:321.20px;top:534.53px;font-size:13.7px;color:#3e4046;">$<span class="o">1</span>.00</div>
<div class="t" style="right:278.20px;top:534.53px;font-size:13.7px;color:#3e4046;">0.99</div>
<div class="abs" style="left:672.00px;top:589.50px;width:984.00px;height:1.00px;background:#eef1f4;"></div>
<div class="abs" style="left:673.80px;top:566.88px;width:13.20px;height:13.20px;background:#fff;border:1px solid #cfd2d6;border-radius:2.5px"></div>
<svg class="abs" style="left:696.3px;top:567.47px" width="12.2" height="12.2" viewBox="0 0 12.2 12.2"><path d="M6.1 0.2V12M0.2 6.1H12" stroke="#8b8d92" stroke-width="1.35"/></svg>
<div class="t" style="letter-spacing:-0.001px;left:720.60px;top:567.18px;font-size:13.7px;color:#2f5f8f;">mens gym clothes</div>
<div class="abs" style="left:1038.30px;top:566.07px;width:15.80px;height:15.40px;background:#c9dcf3;border-radius:3px"></div>
<div class="t" style="left:1038.30px;width:15.8px;text-align:center;top:568.38px;font-size:10.8px;color:#2f3b52">I</div>
<div class="abs" style="left:1058.90px;top:566.07px;width:15.80px;height:15.40px;background:#f9e28c;border-radius:3px"></div>
<div class="t" style="left:1058.90px;width:15.8px;text-align:center;top:568.38px;font-size:10.8px;color:#4f4210">C</div>
<div class="abs" style="left:1079.50px;top:566.07px;width:15.80px;height:15.40px;background:#f7c7c9;border-radius:3px"></div>
<div class="t" style="left:1079.50px;width:15.8px;text-align:center;top:568.38px;font-size:10.8px;color:#55282b">T</div>
<div class="abs" style="left:1168.90px;top:563.88px;width:22.80px;height:20.00px;background:#f9c592;border-radius:3px"></div>
<div class="t" style="left:1168.9px;width:22.8px;text-align:center;top:567.18px;font-size:13.7px;color:#3a3d33">6<span class="o">1</span></div>
<div class="t" style="right:686.40px;top:567.18px;font-size:13.7px;color:#3e4046;">2.6K</div>
<svg class="abs" style="left:0;top:0;overflow:visible" width="1" height="1"><path d="M1245.2 572.3 L1246.2 572.8 L1247.2 571.6 L1248.1 572.6 L1249.1 569.5 L1250.1 565.4 L1251.1 562.2 L1252.1 562.8 L1253.0 564.9 L1254.0 570.2 L1255.0 571.1 L1256.0 572.1 L1257.0 572.5 L1257.9 572.8 L1258.9 572.4 L1259.9 569.5 L1260.9 569.9 L1261.9 570.0 L1262.8 570.0 L1263.8 572.5 L1264.8 572.0 L1265.8 570.7 L1266.8 570.3 L1267.7 569.8 L1268.7 569.7 L1269.7 572.9 L1270.7 570.8 L1271.7 570.5 L1272.6 571.2 L1273.6 572.5 L1274.6 571.3 L1275.6 572.9 L1276.6 569.5 L1277.5 569.8 L1278.5 571.0 L1279.5 572.0 L1280.5 569.6 L1281.5 570.9 L1281.5 582.3 L1245.2 582.3Z" fill="url(#gb)" opacity="1"/><path d="M1281.5 570.9 L1282.4 569.7 L1283.4 569.8 L1284.4 571.2 L1285.4 571.6 L1286.4 570.8 L1287.3 569.8 L1288.3 569.5 L1289.3 568.1 L1290.3 566.0 L1291.3 569.8 L1292.2 571.0 L1293.2 570.4 L1294.2 572.1 L1295.2 571.1 L1296.2 571.3 L1297.1 571.9 L1298.1 569.2 L1299.1 572.4 L1300.1 571.6 L1301.1 572.4 L1302.0 570.7 L1303.0 572.1 L1304.0 571.8 L1304.0 582.3 L1281.5 582.3Z" fill="url(#go)" opacity="1"/><path d="M1245.2 572.3 L1246.2 572.8 L1247.2 571.6 L1248.1 572.6 L1249.1 569.5 L1250.1 565.4 L1251.1 562.2 L1252.1 562.8 L1253.0 564.9 L1254.0 570.2 L1255.0 571.1 L1256.0 572.1 L1257.0 572.5 L1257.9 572.8 L1258.9 572.4 L1259.9 569.5 L1260.9 569.9 L1261.9 570.0 L1262.8 570.0 L1263.8 572.5 L1264.8 572.0 L1265.8 570.7 L1266.8 570.3 L1267.7 569.8 L1268.7 569.7 L1269.7 572.9 L1270.7 570.8 L1271.7 570.5 L1272.6 571.2 L1273.6 572.5 L1274.6 571.3 L1275.6 572.9 L1276.6 569.5 L1277.5 569.8 L1278.5 571.0 L1279.5 572.0 L1280.5 569.6 L1281.5 570.9" fill="none" stroke="#4f86c0" stroke-width="1.1" stroke-linejoin="round"/><path d="M1281.5 570.9 L1282.4 569.7 L1283.4 569.8 L1284.4 571.2 L1285.4 571.6 L1286.4 570.8 L1287.3 569.8 L1288.3 569.5 L1289.3 568.1 L1290.3 566.0 L1291.3 569.8 L1292.2 571.0 L1293.2 570.4 L1294.2 572.1 L1295.2 571.1 L1296.2 571.3 L1297.1 571.9 L1298.1 569.2 L1299.1 572.4 L1300.1 571.6 L1301.1 572.4 L1302.0 570.7 L1303.0 572.1 L1304.0 571.8" fill="none" stroke="#e0a050" stroke-width="1.1" stroke-linejoin="round"/><path d="M1245.2 570.7H1304.0" stroke="#5b7fa8" stroke-width="0.9" stroke-dasharray="1.4 3.4" opacity=".75"/></svg>
<div class="t" style="right:556.10px;top:567.18px;font-size:13.7px;color:#3d9a63;">+5%</div>
<div class="abs" style="left:1379.40px;top:570.57px;width:22.40px;height:5.60px;background:#2f80d2;"></div>
<div class="abs" style="left:1401.80px;top:570.57px;width:9.60px;height:5.60px;background:#f1c829;"></div>
<div class="t" style="right:466.20px;top:567.18px;font-size:13.7px;color:#3e4046;"><span class="o">1</span><span class="o">1</span>K</div>
<div class="t" style="right:418.40px;top:567.18px;font-size:13.7px;color:#3e4046;">3.<span class="o">1</span>K</div>
<div class="t" style="right:372.00px;top:567.18px;font-size:13.7px;color:#3e4046;">3.4K</div>
<div class="t" style="right:321.20px;top:567.18px;font-size:13.7px;color:#3e4046;">$<span class="o">1</span>.<span class="o">1</span>0</div>
<div class="t" style="right:278.20px;top:567.18px;font-size:13.7px;color:#3e4046;"><span class="o">1</span>.03</div>
<div class="abs" style="left:672.00px;top:622.15px;width:984.00px;height:1.00px;background:#eef1f4;"></div>
<div class="abs" style="left:673.80px;top:599.52px;width:13.20px;height:13.20px;background:#fff;border:1px solid #cfd2d6;border-radius:2.5px"></div>
<svg class="abs" style="left:696.3px;top:600.12px" width="12.2" height="12.2" viewBox="0 0 12.2 12.2"><path d="M6.1 0.2V12M0.2 6.1H12" stroke="#8b8d92" stroke-width="1.35"/></svg>
<div class="t" style="letter-spacing:0.011px;left:720.60px;top:599.83px;font-size:13.7px;color:#2f5f8f;">cheap gym clothes</div>
<div class="abs" style="left:1038.30px;top:598.72px;width:15.80px;height:15.40px;background:#f9e28c;border-radius:3px"></div>
<div class="t" style="left:1038.30px;width:15.8px;text-align:center;top:601.02px;font-size:10.8px;color:#4f4210">C</div>
<div class="abs" style="left:1058.90px;top:598.72px;width:15.80px;height:15.40px;background:#f7c7c9;border-radius:3px"></div>
<div class="t" style="left:1058.90px;width:15.8px;text-align:center;top:601.02px;font-size:10.8px;color:#55282b">T</div>
<div class="abs" style="left:1168.90px;top:596.52px;width:22.80px;height:20.00px;background:#80cf9f;border-radius:3px"></div>
<div class="t" style="left:1168.9px;width:22.8px;text-align:center;top:599.83px;font-size:13.7px;color:#3a3d33">8</div>
<div class="t" style="right:686.40px;top:599.83px;font-size:13.7px;color:#3e4046;"><span class="o">1</span>.8K</div>
<svg class="abs" style="left:0;top:0;overflow:visible" width="1" height="1"><path d="M1245.2 612.3 L1246.2 612.1 L1247.2 612.0 L1248.1 611.8 L1249.1 612.1 L1250.1 611.8 L1251.1 613.3 L1252.1 612.6 L1253.0 611.8 L1254.0 612.3 L1255.0 611.9 L1256.0 613.1 L1257.0 612.6 L1257.9 612.9 L1258.9 612.4 L1259.9 612.4 L1260.9 613.3 L1261.9 613.0 L1262.8 612.9 L1263.8 611.8 L1264.8 609.3 L1265.8 601.9 L1266.8 595.1 L1267.7 598.8 L1268.7 606.4 L1269.7 612.9 L1270.7 613.3 L1271.7 611.9 L1272.6 613.0 L1273.6 613.0 L1274.6 611.7 L1275.6 611.9 L1276.6 612.9 L1277.5 611.8 L1278.5 612.4 L1279.5 612.2 L1280.5 613.0 L1281.5 611.8 L1281.5 614.9 L1245.2 614.9Z" fill="url(#gb)" opacity="0.45"/><path d="M1281.5 611.8 L1282.4 612.2 L1283.4 611.8 L1284.4 611.9 L1285.4 612.8 L1286.4 612.7 L1287.3 613.1 L1288.3 613.1 L1289.3 613.2 L1290.3 612.8 L1291.3 612.3 L1292.2 613.3 L1293.2 612.2 L1294.2 612.8 L1295.2 612.8 L1296.2 612.0 L1297.1 612.5 L1298.1 612.8 L1299.1 612.5 L1300.1 612.2 L1301.1 613.2 L1302.0 611.7 L1303.0 613.3 L1304.0 612.1 L1304.0 614.9 L1281.5 614.9Z" fill="url(#go)" opacity="0.45"/><path d="M1245.2 612.3 L1246.2 612.1 L1247.2 612.0 L1248.1 611.8 L1249.1 612.1 L1250.1 611.8 L1251.1 613.3 L1252.1 612.6 L1253.0 611.8 L1254.0 612.3 L1255.0 611.9 L1256.0 613.1 L1257.0 612.6 L1257.9 612.9 L1258.9 612.4 L1259.9 612.4 L1260.9 613.3 L1261.9 613.0 L1262.8 612.9 L1263.8 611.8 L1264.8 609.3 L1265.8 601.9 L1266.8 595.1 L1267.7 598.8 L1268.7 606.4 L1269.7 612.9 L1270.7 613.3 L1271.7 611.9 L1272.6 613.0 L1273.6 613.0 L1274.6 611.7 L1275.6 611.9 L1276.6 612.9 L1277.5 611.8 L1278.5 612.4 L1279.5 612.2 L1280.5 613.0 L1281.5 611.8" fill="none" stroke="#4f86c0" stroke-width="1.1" stroke-linejoin="round"/><path d="M1281.5 611.8 L1282.4 612.2 L1283.4 611.8 L1284.4 611.9 L1285.4 612.8 L1286.4 612.7 L1287.3 613.1 L1288.3 613.1 L1289.3 613.2 L1290.3 612.8 L1291.3 612.3 L1292.2 613.3 L1293.2 612.2 L1294.2 612.8 L1295.2 612.8 L1296.2 612.0 L1297.1 612.5 L1298.1 612.8 L1299.1 612.5 L1300.1 612.2 L1301.1 613.2 L1302.0 611.7 L1303.0 613.3 L1304.0 612.1" fill="none" stroke="#e0a050" stroke-width="1.1" stroke-linejoin="round"/><path d="M1245.2 608.8H1304.0" stroke="#5b7fa8" stroke-width="0.9" stroke-dasharray="1.4 3.4" opacity=".75"/></svg>
<div class="t" style="right:556.10px;top:599.83px;font-size:13.7px;color:#3d9a63;">+5%</div>
<div class="abs" style="left:1379.40px;top:603.22px;width:22.40px;height:5.60px;background:#2f80d2;"></div>
<div class="abs" style="left:1401.80px;top:603.22px;width:9.60px;height:5.60px;background:#f1c829;"></div>
<div class="t" style="right:466.20px;top:599.83px;font-size:13.7px;color:#3e4046;">4.3K</div>
<div class="t" style="right:418.40px;top:599.83px;font-size:13.7px;color:#3e4046;">900</div>
<div class="t" style="right:372.00px;top:599.83px;font-size:13.7px;color:#3e4046;"><span class="o">1</span>.0K</div>
<div class="t" style="right:321.20px;top:599.83px;font-size:13.7px;color:#3e4046;">$<span class="o">1</span>.<span class="o">1</span>0</div>
<div class="t" style="right:278.20px;top:599.83px;font-size:13.7px;color:#3e4046;"><span class="o">1</span>.33</div>
<div class="abs" style="left:672.00px;top:654.80px;width:984.00px;height:1.00px;background:#eef1f4;"></div>
<div class="abs" style="left:673.80px;top:632.17px;width:13.20px;height:13.20px;background:#fff;border:1px solid #cfd2d6;border-radius:2.5px"></div>
<svg class="abs" style="left:696.3px;top:632.77px" width="12.2" height="12.2" viewBox="0 0 12.2 12.2"><path d="M6.1 0.2V12M0.2 6.1H12" stroke="#8b8d92" stroke-width="1.35"/></svg>
<div class="t" style="letter-spacing:-0.013px;left:720.60px;top:632.48px;font-size:13.7px;color:#2f5f8f;">gym clothes for men</div>
<div class="abs" style="left:1038.30px;top:631.37px;width:15.80px;height:15.40px;background:#c9dcf3;border-radius:3px"></div>
<div class="t" style="left:1038.30px;width:15.8px;text-align:center;top:633.67px;font-size:10.8px;color:#2f3b52">I</div>
<div class="abs" style="left:1058.90px;top:631.37px;width:15.80px;height:15.40px;background:#f9e28c;border-radius:3px"></div>
<div class="t" style="left:1058.90px;width:15.8px;text-align:center;top:633.67px;font-size:10.8px;color:#4f4210">C</div>
<div class="abs" style="left:1079.50px;top:631.37px;width:15.80px;height:15.40px;background:#f7c7c9;border-radius:3px"></div>
<div class="t" style="left:1079.50px;width:15.8px;text-align:center;top:633.67px;font-size:10.8px;color:#55282b">T</div>
<div class="abs" style="left:1168.90px;top:629.17px;width:22.80px;height:20.00px;background:#f9e590;border-radius:3px"></div>
<div class="t" style="left:1168.9px;width:22.8px;text-align:center;top:632.48px;font-size:13.7px;color:#3a3d33">47</div>
<div class="t" style="right:686.40px;top:632.48px;font-size:13.7px;color:#3e4046;"><span class="o">1</span>.8K</div>
<svg class="abs" style="left:0;top:0;overflow:visible" width="1" height="1"><path d="M1245.2 644.8 L1246.2 644.8 L1247.2 645.2 L1248.1 645.5 L1249.1 645.8 L1250.1 645.0 L1251.1 645.2 L1252.1 644.8 L1253.0 645.3 L1254.0 644.8 L1255.0 645.4 L1256.0 644.8 L1257.0 644.9 L1257.9 645.3 L1258.9 645.1 L1259.9 644.9 L1260.9 644.8 L1261.9 637.9 L1262.8 630.3 L1263.8 630.1 L1264.8 635.9 L1265.8 643.4 L1266.8 644.7 L1267.7 645.4 L1268.7 645.7 L1269.7 644.8 L1270.7 644.8 L1271.7 645.2 L1272.6 645.7 L1273.6 645.5 L1274.6 645.0 L1275.6 645.4 L1276.6 644.6 L1277.5 645.1 L1278.5 645.5 L1279.5 645.0 L1280.5 645.3 L1281.5 644.6 L1281.5 647.6 L1245.2 647.6Z" fill="url(#gb)" opacity="0.45"/><path d="M1281.5 644.6 L1282.4 644.7 L1283.4 645.1 L1284.4 645.0 L1285.4 644.9 L1286.4 644.8 L1287.3 644.6 L1288.3 645.7 L1289.3 645.3 L1290.3 645.0 L1291.3 645.4 L1292.2 645.1 L1293.2 645.7 L1294.2 644.7 L1295.2 645.1 L1296.2 645.6 L1297.1 645.0 L1298.1 645.4 L1299.1 645.5 L1300.1 645.2 L1301.1 645.6 L1302.0 645.5 L1303.0 644.7 L1304.0 644.9 L1304.0 647.6 L1281.5 647.6Z" fill="url(#go)" opacity="0.45"/><path d="M1245.2 644.8 L1246.2 644.8 L1247.2 645.2 L1248.1 645.5 L1249.1 645.8 L1250.1 645.0 L1251.1 645.2 L1252.1 644.8 L1253.0 645.3 L1254.0 644.8 L1255.0 645.4 L1256.0 644.8 L1257.0 644.9 L1257.9 645.3 L1258.9 645.1 L1259.9 644.9 L1260.9 644.8 L1261.9 637.9 L1262.8 630.3 L1263.8 630.1 L1264.8 635.9 L1265.8 643.4 L1266.8 644.7 L1267.7 645.4 L1268.7 645.7 L1269.7 644.8 L1270.7 644.8 L1271.7 645.2 L1272.6 645.7 L1273.6 645.5 L1274.6 645.0 L1275.6 645.4 L1276.6 644.6 L1277.5 645.1 L1278.5 645.5 L1279.5 645.0 L1280.5 645.3 L1281.5 644.6" fill="none" stroke="#4f86c0" stroke-width="1.1" stroke-linejoin="round"/><path d="M1281.5 644.6 L1282.4 644.7 L1283.4 645.1 L1284.4 645.0 L1285.4 644.9 L1286.4 644.8 L1287.3 644.6 L1288.3 645.7 L1289.3 645.3 L1290.3 645.0 L1291.3 645.4 L1292.2 645.1 L1293.2 645.7 L1294.2 644.7 L1295.2 645.1 L1296.2 645.6 L1297.1 645.0 L1298.1 645.4 L1299.1 645.5 L1300.1 645.2 L1301.1 645.6 L1302.0 645.5 L1303.0 644.7 L1304.0 644.9" fill="none" stroke="#e0a050" stroke-width="1.1" stroke-linejoin="round"/><path d="M1245.2 641.4H1304.0" stroke="#5b7fa8" stroke-width="0.9" stroke-dasharray="1.4 3.4" opacity=".75"/></svg>
<div class="t" style="right:556.10px;top:632.48px;font-size:13.7px;color:#b8463f;">−2%</div>
<div class="abs" style="left:1379.40px;top:635.87px;width:18.56px;height:5.60px;background:#2f80d2;"></div>
<div class="abs" style="left:1397.96px;top:635.87px;width:13.44px;height:5.60px;background:#f1c829;"></div>
<div class="t" style="right:466.20px;top:632.48px;font-size:13.7px;color:#3e4046;"><span class="o">1</span>0K</div>
<div class="t" style="right:418.40px;top:632.48px;font-size:13.7px;color:#3e4046;">3.2K</div>
<div class="t" style="right:372.00px;top:632.48px;font-size:13.7px;color:#3e4046;">3.5K</div>
<div class="t" style="right:321.20px;top:632.48px;font-size:13.7px;color:#3e4046;">$<span class="o">1</span>.20</div>
<div class="t" style="right:278.20px;top:632.48px;font-size:13.7px;color:#3e4046;"><span class="o">1</span>.00</div>
<div class="abs" style="left:672.00px;top:687.45px;width:984.00px;height:1.00px;background:#eef1f4;"></div>
<div class="abs" style="left:673.80px;top:664.83px;width:13.20px;height:13.20px;background:#fff;border:1px solid #cfd2d6;border-radius:2.5px"></div>
<svg class="abs" style="left:696.3px;top:665.42px" width="12.2" height="12.2" viewBox="0 0 12.2 12.2"><path d="M6.1 0.2V12M0.2 6.1H12" stroke="#8b8d92" stroke-width="1.35"/></svg>
<div class="t" style="letter-spacing:0.018px;left:720.60px;top:665.13px;font-size:13.7px;color:#2f5f8f;">gym clothes brands</div>
<div class="abs" style="left:1038.30px;top:664.02px;width:15.80px;height:15.40px;background:#c9dcf3;border-radius:3px"></div>
<div class="t" style="left:1038.30px;width:15.8px;text-align:center;top:666.33px;font-size:10.8px;color:#2f3b52">I</div>
<div class="abs" style="left:1058.90px;top:664.02px;width:15.80px;height:15.40px;background:#f9e28c;border-radius:3px"></div>
<div class="t" style="left:1058.90px;width:15.8px;text-align:center;top:666.33px;font-size:10.8px;color:#4f4210">C</div>
<div class="abs" style="left:1168.90px;top:661.83px;width:22.80px;height:20.00px;background:#f9b99a;border-radius:3px"></div>
<div class="t" style="left:1168.9px;width:22.8px;text-align:center;top:665.13px;font-size:13.7px;color:#3a3d33">74</div>
<div class="t" style="right:686.40px;top:665.13px;font-size:13.7px;color:#3e4046;"><span class="o">1</span>.8K</div>
<svg class="abs" style="left:0;top:0;overflow:visible" width="1" height="1"><path d="M1245.2 678.1 L1246.2 678.4 L1247.2 677.6 L1248.1 678.5 L1249.1 677.8 L1250.1 678.0 L1251.1 678.5 L1252.1 677.8 L1253.0 678.6 L1254.0 677.9 L1255.0 678.5 L1256.0 678.5 L1257.0 677.9 L1257.9 677.3 L1258.9 678.4 L1259.9 678.3 L1260.9 677.6 L1261.9 677.1 L1262.8 677.7 L1263.8 678.0 L1264.8 674.2 L1265.8 667.4 L1266.8 660.3 L1267.7 663.9 L1268.7 672.5 L1269.7 678.2 L1270.7 678.1 L1271.7 677.3 L1272.6 678.3 L1273.6 677.7 L1274.6 677.6 L1275.6 678.0 L1276.6 677.7 L1277.5 678.5 L1278.5 678.5 L1279.5 678.3 L1280.5 677.5 L1281.5 677.9 L1281.5 680.2 L1245.2 680.2Z" fill="url(#gb)" opacity="0.45"/><path d="M1281.5 677.9 L1282.4 678.1 L1283.4 677.7 L1284.4 677.9 L1285.4 678.1 L1286.4 677.3 L1287.3 677.5 L1288.3 678.2 L1289.3 677.7 L1290.3 677.8 L1291.3 677.2 L1292.2 677.4 L1293.2 678.2 L1294.2 677.0 L1295.2 678.4 L1296.2 677.9 L1297.1 677.4 L1298.1 678.4 L1299.1 677.8 L1300.1 678.6 L1301.1 677.5 L1302.0 677.4 L1303.0 677.7 L1304.0 677.2 L1304.0 680.2 L1281.5 680.2Z" fill="url(#go)" opacity="0.45"/><path d="M1245.2 678.1 L1246.2 678.4 L1247.2 677.6 L1248.1 678.5 L1249.1 677.8 L1250.1 678.0 L1251.1 678.5 L1252.1 677.8 L1253.0 678.6 L1254.0 677.9 L1255.0 678.5 L1256.0 678.5 L1257.0 677.9 L1257.9 677.3 L1258.9 678.4 L1259.9 678.3 L1260.9 677.6 L1261.9 677.1 L1262.8 677.7 L1263.8 678.0 L1264.8 674.2 L1265.8 667.4 L1266.8 660.3 L1267.7 663.9 L1268.7 672.5 L1269.7 678.2 L1270.7 678.1 L1271.7 677.3 L1272.6 678.3 L1273.6 677.7 L1274.6 677.6 L1275.6 678.0 L1276.6 677.7 L1277.5 678.5 L1278.5 678.5 L1279.5 678.3 L1280.5 677.5 L1281.5 677.9" fill="none" stroke="#4f86c0" stroke-width="1.1" stroke-linejoin="round"/><path d="M1281.5 677.9 L1282.4 678.1 L1283.4 677.7 L1284.4 677.9 L1285.4 678.1 L1286.4 677.3 L1287.3 677.5 L1288.3 678.2 L1289.3 677.7 L1290.3 677.8 L1291.3 677.2 L1292.2 677.4 L1293.2 678.2 L1294.2 677.0 L1295.2 678.4 L1296.2 677.9 L1297.1 677.4 L1298.1 678.4 L1299.1 677.8 L1300.1 678.6 L1301.1 677.5 L1302.0 677.4 L1303.0 677.7 L1304.0 677.2" fill="none" stroke="#e0a050" stroke-width="1.1" stroke-linejoin="round"/><path d="M1245.2 674.1H1304.0" stroke="#5b7fa8" stroke-width="0.9" stroke-dasharray="1.4 3.4" opacity=".75"/></svg>
<div class="t" style="right:556.10px;top:665.13px;font-size:13.7px;color:#3d9a63;">+<span class="o">1</span>4%</div>
<div class="abs" style="left:1379.40px;top:668.52px;width:19.20px;height:5.60px;background:#2f80d2;"></div>
<div class="abs" style="left:1398.60px;top:668.52px;width:12.80px;height:5.60px;background:#f1c829;"></div>
<div class="t" style="right:466.20px;top:665.13px;font-size:13.7px;color:#3e4046;">3.4K</div>
<div class="t" style="right:418.40px;top:665.13px;font-size:13.7px;color:#3e4046;">3.5K</div>
<div class="t" style="right:372.00px;top:665.13px;font-size:13.7px;color:#3e4046;">3.8K</div>
<div class="t" style="right:321.20px;top:665.13px;font-size:13.7px;color:#3e4046;">$0.90</div>
<div class="t" style="right:278.20px;top:665.13px;font-size:13.7px;color:#3e4046;"><span class="o">1</span>.4<span class="o">1</span></div>
<div class="abs" style="left:672.00px;top:720.10px;width:984.00px;height:1.00px;background:#eef1f4;"></div>
<div class="abs" style="left:673.80px;top:697.48px;width:13.20px;height:13.20px;background:#fff;border:1px solid #cfd2d6;border-radius:2.5px"></div>
<svg class="abs" style="left:696.3px;top:698.07px" width="12.2" height="12.2" viewBox="0 0 12.2 12.2"><path d="M6.1 0.2V12M0.2 6.1H12" stroke="#8b8d92" stroke-width="1.35"/></svg>
<div class="t" style="letter-spacing:-0.041px;left:720.60px;top:697.78px;font-size:13.7px;color:#2f5f8f;">gym clothes near me</div>
<div class="abs" style="left:1038.30px;top:696.67px;width:15.80px;height:15.40px;background:#c9dcf3;border-radius:3px"></div>
<div class="t" style="left:1038.30px;width:15.8px;text-align:center;top:698.98px;font-size:10.8px;color:#2f3b52">I</div>
<div class="abs" style="left:1058.90px;top:696.67px;width:15.80px;height:15.40px;background:#f9e28c;border-radius:3px"></div>
<div class="t" style="left:1058.90px;width:15.8px;text-align:center;top:698.98px;font-size:10.8px;color:#4f4210">C</div>
<div class="abs" style="left:1080.10px;top:696.67px;width:35.60px;height:15.40px;background:#eeeff1;border-radius:8px"></div>
<div class="t" style="letter-spacing:0.091px;left:1084.30px;top:698.62px;font-size:11.4px;color:#45474d;text-shadow:0 0 .4px #45474d;">Local</div>
<div class="abs" style="left:1168.90px;top:694.48px;width:22.80px;height:20.00px;background:#f9b99a;border-radius:3px"></div>
<div class="t" style="left:1168.9px;width:22.8px;text-align:center;top:697.78px;font-size:13.7px;color:#3a3d33">7<span class="o">1</span></div>
<div class="t" style="right:686.40px;top:697.78px;font-size:13.7px;color:#3e4046;"><span class="o">1</span>.6K</div>
<svg class="abs" style="left:0;top:0;overflow:visible" width="1" height="1"><path d="M1245.2 702.2 L1246.2 700.9 L1247.2 699.5 L1248.1 698.2 L1249.1 699.2 L1250.1 698.4 L1251.1 694.8 L1252.1 698.6 L1253.0 696.5 L1254.0 697.4 L1255.0 697.4 L1256.0 697.2 L1257.0 698.7 L1257.9 695.6 L1258.9 699.2 L1259.9 698.5 L1260.9 699.5 L1261.9 698.3 L1262.8 697.6 L1263.8 695.3 L1264.8 697.8 L1265.8 699.1 L1266.8 698.4 L1267.7 694.8 L1268.7 699.3 L1269.7 696.6 L1270.7 697.8 L1271.7 696.4 L1272.6 698.0 L1273.6 696.3 L1274.6 697.2 L1275.6 696.5 L1276.6 695.3 L1277.5 696.8 L1278.5 698.9 L1279.5 699.3 L1280.5 695.0 L1281.5 697.3 L1281.5 712.9 L1245.2 712.9Z" fill="url(#gb)" opacity="1"/><path d="M1281.5 697.3 L1282.4 698.7 L1283.4 695.0 L1284.4 696.8 L1285.4 696.1 L1286.4 695.4 L1287.3 698.2 L1288.3 697.9 L1289.3 695.4 L1290.3 699.0 L1291.3 695.9 L1292.2 699.1 L1293.2 696.3 L1294.2 696.2 L1295.2 695.0 L1296.2 695.5 L1297.1 697.2 L1298.1 698.7 L1299.1 698.9 L1300.1 697.1 L1301.1 697.1 L1302.0 699.3 L1303.0 695.3 L1304.0 697.2 L1304.0 712.9 L1281.5 712.9Z" fill="url(#go)" opacity="1"/><path d="M1245.2 702.2 L1246.2 700.9 L1247.2 699.5 L1248.1 698.2 L1249.1 699.2 L1250.1 698.4 L1251.1 694.8 L1252.1 698.6 L1253.0 696.5 L1254.0 697.4 L1255.0 697.4 L1256.0 697.2 L1257.0 698.7 L1257.9 695.6 L1258.9 699.2 L1259.9 698.5 L1260.9 699.5 L1261.9 698.3 L1262.8 697.6 L1263.8 695.3 L1264.8 697.8 L1265.8 699.1 L1266.8 698.4 L1267.7 694.8 L1268.7 699.3 L1269.7 696.6 L1270.7 697.8 L1271.7 696.4 L1272.6 698.0 L1273.6 696.3 L1274.6 697.2 L1275.6 696.5 L1276.6 695.3 L1277.5 696.8 L1278.5 698.9 L1279.5 699.3 L1280.5 695.0 L1281.5 697.3" fill="none" stroke="#4f86c0" stroke-width="1.1" stroke-linejoin="round"/><path d="M1281.5 697.3 L1282.4 698.7 L1283.4 695.0 L1284.4 696.8 L1285.4 696.1 L1286.4 695.4 L1287.3 698.2 L1288.3 697.9 L1289.3 695.4 L1290.3 699.0 L1291.3 695.9 L1292.2 699.1 L1293.2 696.3 L1294.2 696.2 L1295.2 695.0 L1296.2 695.5 L1297.1 697.2 L1298.1 698.7 L1299.1 698.9 L1300.1 697.1 L1301.1 697.1 L1302.0 699.3 L1303.0 695.3 L1304.0 697.2" fill="none" stroke="#e0a050" stroke-width="1.1" stroke-linejoin="round"/><path d="M1245.2 696.7H1304.0" stroke="#5b7fa8" stroke-width="0.9" stroke-dasharray="1.4 3.4" opacity=".75"/></svg>
<div class="t" style="right:556.10px;top:697.78px;font-size:13.7px;color:#3d9a63;">+<span class="o">1</span>5%</div>
<div class="abs" style="left:1379.40px;top:701.17px;width:30.40px;height:5.60px;background:#2f80d2;"></div>
<div class="abs" style="left:1409.80px;top:701.17px;width:1.60px;height:5.60px;background:#f1c829;"></div>
<div class="t" style="right:466.20px;top:697.78px;font-size:13.7px;color:#3e4046;">2.7K</div>
<div class="t" style="right:418.40px;top:697.78px;font-size:13.7px;color:#3e4046;"><span class="o">1</span>2K</div>
<div class="t" style="right:372.00px;top:697.78px;font-size:13.7px;color:#3e4046;"><span class="o">1</span>3K</div>
<div class="t" style="right:321.20px;top:697.78px;font-size:13.7px;color:#3e4046;">$0.60</div>
<div class="t" style="right:278.20px;top:697.78px;font-size:13.7px;color:#b9bbbf;">N/A</div>
<div class="abs" style="left:672.00px;top:752.75px;width:984.00px;height:1.00px;background:#eef1f4;"></div>
<div class="abs" style="left:673.80px;top:730.12px;width:13.20px;height:13.20px;background:#fff;border:1px solid #cfd2d6;border-radius:2.5px"></div>
<svg class="abs" style="left:696.3px;top:730.72px" width="12.2" height="12.2" viewBox="0 0 12.2 12.2"><path d="M6.1 0.2V12M0.2 6.1H12" stroke="#8b8d92" stroke-width="1.35"/></svg>
<div class="t" style="letter-spacing:0.011px;left:720.60px;top:730.43px;font-size:13.7px;color:#2f5f8f;">womens gym clothes</div>
<div class="abs" style="left:1038.30px;top:729.32px;width:15.80px;height:15.40px;background:#c9dcf3;border-radius:3px"></div>
<div class="t" style="left:1038.30px;width:15.8px;text-align:center;top:731.62px;font-size:10.8px;color:#2f3b52">I</div>
<div class="abs" style="left:1058.90px;top:729.32px;width:15.80px;height:15.40px;background:#f9e28c;border-radius:3px"></div>
<div class="t" style="left:1058.90px;width:15.8px;text-align:center;top:731.62px;font-size:10.8px;color:#4f4210">C</div>
<div class="abs" style="left:1079.50px;top:729.32px;width:15.80px;height:15.40px;background:#f7c7c9;border-radius:3px"></div>
<div class="t" style="left:1079.50px;width:15.8px;text-align:center;top:731.62px;font-size:10.8px;color:#55282b">T</div>
<div class="abs" style="left:1168.90px;top:727.12px;width:22.80px;height:20.00px;background:#f9e590;border-radius:3px"></div>
<div class="t" style="left:1168.9px;width:22.8px;text-align:center;top:730.43px;font-size:13.7px;color:#3a3d33">43</div>
<div class="t" style="right:686.40px;top:730.43px;font-size:13.7px;color:#3e4046;"><span class="o">1</span>.5K</div>
<svg class="abs" style="left:0;top:0;overflow:visible" width="1" height="1"><path d="M1245.2 734.6 L1246.2 735.1 L1247.2 736.2 L1248.1 731.1 L1249.1 733.0 L1250.1 729.0 L1251.1 726.5 L1252.1 731.0 L1253.0 730.3 L1254.0 732.3 L1255.0 736.7 L1256.0 735.1 L1257.0 733.5 L1257.9 734.7 L1258.9 733.4 L1259.9 736.1 L1260.9 735.7 L1261.9 736.3 L1262.8 734.4 L1263.8 732.4 L1264.8 734.0 L1265.8 733.1 L1266.8 735.0 L1267.7 733.3 L1268.7 736.4 L1269.7 735.5 L1270.7 733.6 L1271.7 733.4 L1272.6 734.8 L1273.6 736.5 L1274.6 735.6 L1275.6 735.9 L1276.6 735.5 L1277.5 733.0 L1278.5 735.9 L1279.5 732.6 L1280.5 732.6 L1281.5 736.6 L1281.5 745.5 L1245.2 745.5Z" fill="url(#gb)" opacity="1"/><path d="M1281.5 736.6 L1282.4 735.1 L1283.4 734.5 L1284.4 736.8 L1285.4 734.5 L1286.4 730.7 L1287.3 733.2 L1288.3 729.8 L1289.3 731.5 L1290.3 729.1 L1291.3 727.8 L1292.2 731.9 L1293.2 733.9 L1294.2 735.0 L1295.2 734.3 L1296.2 736.8 L1297.1 736.5 L1298.1 734.5 L1299.1 732.4 L1300.1 734.9 L1301.1 735.0 L1302.0 733.8 L1303.0 736.4 L1304.0 734.1 L1304.0 745.5 L1281.5 745.5Z" fill="url(#go)" opacity="1"/><path d="M1245.2 734.6 L1246.2 735.1 L1247.2 736.2 L1248.1 731.1 L1249.1 733.0 L1250.1 729.0 L1251.1 726.5 L1252.1 731.0 L1253.0 730.3 L1254.0 732.3 L1255.0 736.7 L1256.0 735.1 L1257.0 733.5 L1257.9 734.7 L1258.9 733.4 L1259.9 736.1 L1260.9 735.7 L1261.9 736.3 L1262.8 734.4 L1263.8 732.4 L1264.8 734.0 L1265.8 733.1 L1266.8 735.0 L1267.7 733.3 L1268.7 736.4 L1269.7 735.5 L1270.7 733.6 L1271.7 733.4 L1272.6 734.8 L1273.6 736.5 L1274.6 735.6 L1275.6 735.9 L1276.6 735.5 L1277.5 733.0 L1278.5 735.9 L1279.5 732.6 L1280.5 732.6 L1281.5 736.6" fill="none" stroke="#4f86c0" stroke-width="1.1" stroke-linejoin="round"/><path d="M1281.5 736.6 L1282.4 735.1 L1283.4 734.5 L1284.4 736.8 L1285.4 734.5 L1286.4 730.7 L1287.3 733.2 L1288.3 729.8 L1289.3 731.5 L1290.3 729.1 L1291.3 727.8 L1292.2 731.9 L1293.2 733.9 L1294.2 735.0 L1295.2 734.3 L1296.2 736.8 L1297.1 736.5 L1298.1 734.5 L1299.1 732.4 L1300.1 734.9 L1301.1 735.0 L1302.0 733.8 L1303.0 736.4 L1304.0 734.1" fill="none" stroke="#e0a050" stroke-width="1.1" stroke-linejoin="round"/><path d="M1245.2 734.0H1304.0" stroke="#5b7fa8" stroke-width="0.9" stroke-dasharray="1.4 3.4" opacity=".75"/></svg>
<div class="t" style="right:556.10px;top:730.43px;font-size:13.7px;color:#3d9a63;">+<span class="o">1</span><span class="o">1</span>%</div>
<div class="abs" style="left:1379.40px;top:733.82px;width:20.80px;height:5.60px;background:#2f80d2;"></div>
<div class="abs" style="left:1400.20px;top:733.82px;width:11.20px;height:5.60px;background:#f1c829;"></div>
<div class="t" style="right:466.20px;top:730.43px;font-size:13.7px;color:#3e4046;">5.9K</div>
<div class="t" style="right:418.40px;top:730.43px;font-size:13.7px;color:#3e4046;">37K</div>
<div class="t" style="right:372.00px;top:730.43px;font-size:13.7px;color:#3e4046;">40K</div>
<div class="t" style="right:321.20px;top:730.43px;font-size:13.7px;color:#3e4046;">$<span class="o">1</span>.20</div>
<div class="t" style="right:278.20px;top:730.43px;font-size:13.7px;color:#3e4046;">0.9<span class="o">1</span></div>
<div class="abs" style="left:672.00px;top:785.40px;width:984.00px;height:1.00px;background:#eef1f4;"></div>
<div class="abs" style="left:673.80px;top:762.78px;width:13.20px;height:13.20px;background:#fff;border:1px solid #cfd2d6;border-radius:2.5px"></div>
<svg class="abs" style="left:696.3px;top:763.38px" width="12.2" height="12.2" viewBox="0 0 12.2 12.2"><path d="M6.1 0.2V12M0.2 6.1H12" stroke="#8b8d92" stroke-width="1.35"/></svg>
<div class="t" style="letter-spacing:0.049px;left:720.60px;top:763.08px;font-size:13.7px;color:#2f5f8f;">affordable gym clothes</div>
<div class="abs" style="left:1038.30px;top:761.98px;width:15.80px;height:15.40px;background:#c9dcf3;border-radius:3px"></div>
<div class="t" style="left:1038.30px;width:15.8px;text-align:center;top:764.28px;font-size:10.8px;color:#2f3b52">I</div>
<div class="abs" style="left:1058.90px;top:761.98px;width:15.80px;height:15.40px;background:#f9e28c;border-radius:3px"></div>
<div class="t" style="left:1058.90px;width:15.8px;text-align:center;top:764.28px;font-size:10.8px;color:#4f4210">C</div>
<div class="abs" style="left:1079.50px;top:761.98px;width:15.80px;height:15.40px;background:#f7c7c9;border-radius:3px"></div>
<div class="t" style="left:1079.50px;width:15.8px;text-align:center;top:764.28px;font-size:10.8px;color:#55282b">T</div>
<div class="abs" style="left:1168.90px;top:759.78px;width:22.80px;height:20.00px;background:#f9e590;border-radius:3px"></div>
<div class="t" style="left:1168.9px;width:22.8px;text-align:center;top:763.08px;font-size:13.7px;color:#3a3d33">46</div>
<div class="t" style="right:686.40px;top:763.08px;font-size:13.7px;color:#3e4046;"><span class="o">1</span>.3K</div>
<svg class="abs" style="left:0;top:0;overflow:visible" width="1" height="1"><path d="M1245.2 769.6 L1246.2 770.6 L1247.2 769.6 L1248.1 772.3 L1249.1 767.9 L1250.1 767.8 L1251.1 769.0 L1252.1 772.6 L1253.0 770.0 L1254.0 771.4 L1255.0 771.9 L1256.0 766.9 L1257.0 766.5 L1257.9 773.4 L1258.9 767.5 L1259.9 769.4 L1260.9 771.0 L1261.9 771.7 L1262.8 768.9 L1263.8 765.9 L1264.8 761.0 L1265.8 759.9 L1266.8 765.0 L1267.7 763.7 L1268.7 766.6 L1269.7 766.7 L1270.7 769.3 L1271.7 773.4 L1272.6 773.7 L1273.6 772.8 L1274.6 766.9 L1275.6 771.6 L1276.6 771.1 L1277.5 767.3 L1278.5 771.5 L1279.5 769.8 L1280.5 770.6 L1281.5 773.3 L1281.5 778.2 L1245.2 778.2Z" fill="url(#gb)" opacity="1"/><path d="M1281.5 773.3 L1282.4 769.5 L1283.4 767.6 L1284.4 772.6 L1285.4 772.1 L1286.4 770.8 L1287.3 773.5 L1288.3 770.2 L1289.3 767.8 L1290.3 769.0 L1291.3 769.9 L1292.2 767.6 L1293.2 772.7 L1294.2 769.6 L1295.2 771.0 L1296.2 769.4 L1297.1 772.9 L1298.1 768.1 L1299.1 773.1 L1300.1 772.5 L1301.1 767.9 L1302.0 766.9 L1303.0 770.6 L1304.0 770.8 L1304.0 778.2 L1281.5 778.2Z" fill="url(#go)" opacity="1"/><path d="M1245.2 769.6 L1246.2 770.6 L1247.2 769.6 L1248.1 772.3 L1249.1 767.9 L1250.1 767.8 L1251.1 769.0 L1252.1 772.6 L1253.0 770.0 L1254.0 771.4 L1255.0 771.9 L1256.0 766.9 L1257.0 766.5 L1257.9 773.4 L1258.9 767.5 L1259.9 769.4 L1260.9 771.0 L1261.9 771.7 L1262.8 768.9 L1263.8 765.9 L1264.8 761.0 L1265.8 759.9 L1266.8 765.0 L1267.7 763.7 L1268.7 766.6 L1269.7 766.7 L1270.7 769.3 L1271.7 773.4 L1272.6 773.7 L1273.6 772.8 L1274.6 766.9 L1275.6 771.6 L1276.6 771.1 L1277.5 767.3 L1278.5 771.5 L1279.5 769.8 L1280.5 770.6 L1281.5 773.3" fill="none" stroke="#4f86c0" stroke-width="1.1" stroke-linejoin="round"/><path d="M1281.5 773.3 L1282.4 769.5 L1283.4 767.6 L1284.4 772.6 L1285.4 772.1 L1286.4 770.8 L1287.3 773.5 L1288.3 770.2 L1289.3 767.8 L1290.3 769.0 L1291.3 769.9 L1292.2 767.6 L1293.2 772.7 L1294.2 769.6 L1295.2 771.0 L1296.2 769.4 L1297.1 772.9 L1298.1 768.1 L1299.1 773.1 L1300.1 772.5 L1301.1 767.9 L1302.0 766.9 L1303.0 770.6 L1304.0 770.8" fill="none" stroke="#e0a050" stroke-width="1.1" stroke-linejoin="round"/><path d="M1245.2 769.6H1304.0" stroke="#5b7fa8" stroke-width="0.9" stroke-dasharray="1.4 3.4" opacity=".75"/></svg>
<div class="t" style="right:556.10px;top:763.08px;font-size:13.7px;color:#3d9a63;">+<span class="o">1</span>2%</div>
<div class="abs" style="left:1379.40px;top:766.48px;width:22.40px;height:5.60px;background:#2f80d2;"></div>
<div class="abs" style="left:1401.80px;top:766.48px;width:9.60px;height:5.60px;background:#f1c829;"></div>
<div class="t" style="right:466.20px;top:763.08px;font-size:13.7px;color:#3e4046;">2.2K</div>
<div class="t" style="right:418.40px;top:763.08px;font-size:13.7px;color:#3e4046;">2.2K</div>
<div class="t" style="right:372.00px;top:763.08px;font-size:13.7px;color:#3e4046;">2.4K</div>
<div class="t" style="right:321.20px;top:763.08px;font-size:13.7px;color:#3e4046;">$0.90</div>
<div class="t" style="right:278.20px;top:763.08px;font-size:13.7px;color:#3e4046;"><span class="o">1</span>.35</div>
<div class="abs" style="left:672.00px;top:818.05px;width:984.00px;height:1.00px;background:#eef1f4;"></div>
<div class="abs" style="left:673.80px;top:795.42px;width:13.20px;height:13.20px;background:#fff;border:1px solid #cfd2d6;border-radius:2.5px"></div>
<svg class="abs" style="left:696.3px;top:796.02px" width="12.2" height="12.2" viewBox="0 0 12.2 12.2"><path d="M6.1 0.2V12M0.2 6.1H12" stroke="#8b8d92" stroke-width="1.35"/></svg>
<div class="t" style="letter-spacing:0.002px;left:720.60px;top:795.73px;font-size:13.7px;color:#2f5f8f;">men gym clothes</div>
<div class="abs" style="left:1038.30px;top:794.62px;width:15.80px;height:15.40px;background:#c9dcf3;border-radius:3px"></div>
<div class="t" style="left:1038.30px;width:15.8px;text-align:center;top:796.92px;font-size:10.8px;color:#2f3b52">I</div>
<div class="abs" style="left:1058.90px;top:794.62px;width:15.80px;height:15.40px;background:#f9e28c;border-radius:3px"></div>
<div class="t" style="left:1058.90px;width:15.8px;text-align:center;top:796.92px;font-size:10.8px;color:#4f4210">C</div>
<div class="abs" style="left:1079.50px;top:794.62px;width:15.80px;height:15.40px;background:#f7c7c9;border-radius:3px"></div>
<div class="t" style="left:1079.50px;width:15.8px;text-align:center;top:796.92px;font-size:10.8px;color:#55282b">T</div>
<div class="abs" style="left:1168.90px;top:792.42px;width:22.80px;height:20.00px;background:#dbe69b;border-radius:3px"></div>
<div class="t" style="left:1168.9px;width:22.8px;text-align:center;top:795.73px;font-size:13.7px;color:#3a3d33">30</div>
<div class="t" style="right:686.40px;top:795.73px;font-size:13.7px;color:#3e4046;"><span class="o">1</span>.3K</div>
<svg class="abs" style="left:0;top:0;overflow:visible" width="1" height="1"><path d="M1245.2 800.9 L1246.2 800.6 L1247.2 799.4 L1248.1 800.9 L1249.1 800.7 L1250.1 800.5 L1251.1 801.8 L1252.1 800.7 L1253.0 800.4 L1254.0 799.8 L1255.0 802.1 L1256.0 801.4 L1257.0 802.1 L1257.9 799.8 L1258.9 800.2 L1259.9 802.2 L1260.9 799.2 L1261.9 799.3 L1262.8 800.3 L1263.8 800.4 L1264.8 801.9 L1265.8 802.3 L1266.8 799.8 L1267.7 799.2 L1268.7 797.1 L1269.7 795.8 L1270.7 796.3 L1271.7 795.5 L1272.6 796.9 L1273.6 797.5 L1274.6 800.7 L1275.6 800.3 L1276.6 800.8 L1277.5 800.3 L1278.5 800.9 L1279.5 801.5 L1280.5 799.2 L1281.5 799.2 L1281.5 810.8 L1245.2 810.8Z" fill="url(#gb)" opacity="1"/><path d="M1281.5 799.2 L1282.4 799.7 L1283.4 800.1 L1284.4 801.4 L1285.4 801.6 L1286.4 801.5 L1287.3 802.2 L1288.3 799.9 L1289.3 801.1 L1290.3 799.7 L1291.3 801.1 L1292.2 799.3 L1293.2 799.7 L1294.2 802.4 L1295.2 801.7 L1296.2 799.5 L1297.1 800.9 L1298.1 799.2 L1299.1 801.1 L1300.1 802.1 L1301.1 800.4 L1302.0 799.9 L1303.0 801.5 L1304.0 802.1 L1304.0 810.8 L1281.5 810.8Z" fill="url(#go)" opacity="1"/><path d="M1245.2 800.9 L1246.2 800.6 L1247.2 799.4 L1248.1 800.9 L1249.1 800.7 L1250.1 800.5 L1251.1 801.8 L1252.1 800.7 L1253.0 800.4 L1254.0 799.8 L1255.0 802.1 L1256.0 801.4 L1257.0 802.1 L1257.9 799.8 L1258.9 800.2 L1259.9 802.2 L1260.9 799.2 L1261.9 799.3 L1262.8 800.3 L1263.8 800.4 L1264.8 801.9 L1265.8 802.3 L1266.8 799.8 L1267.7 799.2 L1268.7 797.1 L1269.7 795.8 L1270.7 796.3 L1271.7 795.5 L1272.6 796.9 L1273.6 797.5 L1274.6 800.7 L1275.6 800.3 L1276.6 800.8 L1277.5 800.3 L1278.5 800.9 L1279.5 801.5 L1280.5 799.2 L1281.5 799.2" fill="none" stroke="#4f86c0" stroke-width="1.1" stroke-linejoin="round"/><path d="M1281.5 799.2 L1282.4 799.7 L1283.4 800.1 L1284.4 801.4 L1285.4 801.6 L1286.4 801.5 L1287.3 802.2 L1288.3 799.9 L1289.3 801.1 L1290.3 799.7 L1291.3 801.1 L1292.2 799.3 L1293.2 799.7 L1294.2 802.4 L1295.2 801.7 L1296.2 799.5 L1297.1 800.9 L1298.1 799.2 L1299.1 801.1 L1300.1 802.1 L1301.1 800.4 L1302.0 799.9 L1303.0 801.5 L1304.0 802.1" fill="none" stroke="#e0a050" stroke-width="1.1" stroke-linejoin="round"/><path d="M1245.2 800.3H1304.0" stroke="#5b7fa8" stroke-width="0.9" stroke-dasharray="1.4 3.4" opacity=".75"/></svg>
<div class="t" style="right:556.10px;top:795.73px;font-size:13.7px;color:#3d9a63;">+<span class="o">1</span>2%</div>
<div class="abs" style="left:1379.40px;top:799.12px;width:24.96px;height:5.60px;background:#2f80d2;"></div>
<div class="abs" style="left:1404.36px;top:799.12px;width:7.04px;height:5.60px;background:#f1c829;"></div>
<div class="t" style="right:466.20px;top:795.73px;font-size:13.7px;color:#3e4046;">3.<span class="o">1</span>K</div>
<div class="t" style="right:418.40px;top:795.73px;font-size:13.7px;color:#3e4046;"><span class="o">1</span>2K</div>
<div class="t" style="right:372.00px;top:795.73px;font-size:13.7px;color:#3e4046;"><span class="o">1</span>2K</div>
<div class="t" style="right:321.20px;top:795.73px;font-size:13.7px;color:#3e4046;">$<span class="o">1</span>.20</div>
<div class="t" style="right:278.20px;top:795.73px;font-size:13.7px;color:#3e4046;"><span class="o">1</span>.09</div>
<div class="abs" style="left:672.00px;top:850.70px;width:984.00px;height:1.00px;background:#eef1f4;"></div>
<div class="abs" style="left:673.80px;top:828.08px;width:13.20px;height:13.20px;background:#fff;border:1px solid #cfd2d6;border-radius:2.5px"></div>
<svg class="abs" style="left:696.3px;top:828.67px" width="12.2" height="12.2" viewBox="0 0 12.2 12.2"><path d="M6.1 0.2V12M0.2 6.1H12" stroke="#8b8d92" stroke-width="1.35"/></svg>
<div class="t" style="letter-spacing:0.053px;left:720.60px;top:828.38px;font-size:13.7px;color:#2f5f8f;">best gym clothes for</div>
<div class="abs" style="left:1038.30px;top:827.27px;width:15.80px;height:15.40px;background:#c9dcf3;border-radius:3px"></div>
<div class="t" style="left:1038.30px;width:15.8px;text-align:center;top:829.58px;font-size:10.8px;color:#2f3b52">I</div>
<div class="abs" style="left:1058.90px;top:827.27px;width:15.80px;height:15.40px;background:#f9e28c;border-radius:3px"></div>
<div class="t" style="left:1058.90px;width:15.8px;text-align:center;top:829.58px;font-size:10.8px;color:#4f4210">C</div>
<div class="abs" style="left:1168.90px;top:825.08px;width:22.80px;height:20.00px;background:#fbd48c;border-radius:3px"></div>
<div class="t" style="left:1168.9px;width:22.8px;text-align:center;top:828.38px;font-size:13.7px;color:#3a3d33">50</div>
<div class="t" style="right:686.40px;top:828.38px;font-size:13.7px;color:#3e4046;"><span class="o">1</span>.<span class="o">1</span>K</div>
<svg class="abs" style="left:0;top:0;overflow:visible" width="1" height="1"><path d="M1245.2 832.5 L1246.2 831.7 L1247.2 831.6 L1248.1 832.6 L1249.1 830.9 L1250.1 827.6 L1251.1 827.5 L1252.1 825.5 L1253.0 827.6 L1254.0 830.4 L1255.0 832.1 L1256.0 831.6 L1257.0 834.1 L1257.9 832.7 L1258.9 834.0 L1259.9 830.5 L1260.9 834.5 L1261.9 830.9 L1262.8 834.5 L1263.8 831.5 L1264.8 833.2 L1265.8 832.9 L1266.8 830.8 L1267.7 834.7 L1268.7 834.5 L1269.7 830.4 L1270.7 832.4 L1271.7 834.4 L1272.6 830.1 L1273.6 830.3 L1274.6 834.3 L1275.6 832.8 L1276.6 834.2 L1277.5 833.3 L1278.5 831.8 L1279.5 834.0 L1280.5 831.5 L1281.5 834.6 L1281.5 843.5 L1245.2 843.5Z" fill="url(#gb)" opacity="1"/><path d="M1281.5 834.6 L1282.4 834.0 L1283.4 830.9 L1284.4 832.9 L1285.4 832.5 L1286.4 830.1 L1287.3 829.4 L1288.3 828.8 L1289.3 829.9 L1290.3 826.3 L1291.3 825.4 L1292.2 826.1 L1293.2 828.7 L1294.2 831.6 L1295.2 833.1 L1296.2 831.5 L1297.1 831.6 L1298.1 834.3 L1299.1 833.7 L1300.1 833.1 L1301.1 832.4 L1302.0 830.9 L1303.0 832.4 L1304.0 834.7 L1304.0 843.5 L1281.5 843.5Z" fill="url(#go)" opacity="1"/><path d="M1245.2 832.5 L1246.2 831.7 L1247.2 831.6 L1248.1 832.6 L1249.1 830.9 L1250.1 827.6 L1251.1 827.5 L1252.1 825.5 L1253.0 827.6 L1254.0 830.4 L1255.0 832.1 L1256.0 831.6 L1257.0 834.1 L1257.9 832.7 L1258.9 834.0 L1259.9 830.5 L1260.9 834.5 L1261.9 830.9 L1262.8 834.5 L1263.8 831.5 L1264.8 833.2 L1265.8 832.9 L1266.8 830.8 L1267.7 834.7 L1268.7 834.5 L1269.7 830.4 L1270.7 832.4 L1271.7 834.4 L1272.6 830.1 L1273.6 830.3 L1274.6 834.3 L1275.6 832.8 L1276.6 834.2 L1277.5 833.3 L1278.5 831.8 L1279.5 834.0 L1280.5 831.5 L1281.5 834.6" fill="none" stroke="#4f86c0" stroke-width="1.1" stroke-linejoin="round"/><path d="M1281.5 834.6 L1282.4 834.0 L1283.4 830.9 L1284.4 832.9 L1285.4 832.5 L1286.4 830.1 L1287.3 829.4 L1288.3 828.8 L1289.3 829.9 L1290.3 826.3 L1291.3 825.4 L1292.2 826.1 L1293.2 828.7 L1294.2 831.6 L1295.2 833.1 L1296.2 831.5 L1297.1 831.6 L1298.1 834.3 L1299.1 833.7 L1300.1 833.1 L1301.1 832.4 L1302.0 830.9 L1303.0 832.4 L1304.0 834.7" fill="none" stroke="#e0a050" stroke-width="1.1" stroke-linejoin="round"/><path d="M1245.2 831.9H1304.0" stroke="#5b7fa8" stroke-width="0.9" stroke-dasharray="1.4 3.4" opacity=".75"/></svg>
<div class="t" style="right:556.10px;top:828.38px;font-size:13.7px;color:#3d9a63;">+<span class="o">1</span>3%</div>
<div class="abs" style="left:1379.40px;top:831.77px;width:21.76px;height:5.60px;background:#2f80d2;"></div>
<div class="abs" style="left:1401.16px;top:831.77px;width:10.24px;height:5.60px;background:#f1c829;"></div>
<div class="t" style="right:466.20px;top:828.38px;font-size:13.7px;color:#3e4046;">2.4K</div>
<div class="t" style="right:418.40px;top:828.38px;font-size:13.7px;color:#3e4046;">7.8K</div>
<div class="t" style="right:372.00px;top:828.38px;font-size:13.7px;color:#3e4046;">8.3K</div>
<div class="t" style="right:321.20px;top:828.38px;font-size:13.7px;color:#3e4046;">$<span class="o">1</span>.70</div>
<div class="t" style="right:278.20px;top:828.38px;font-size:13.7px;color:#3e4046;"><span class="o">1</span>.23</div>
<div class="abs" style="left:672.00px;top:883.35px;width:984.00px;height:1.00px;background:#eef1f4;"></div>
<div class="abs" style="left:673.80px;top:860.73px;width:13.20px;height:13.20px;background:#fff;border:1px solid #cfd2d6;border-radius:2.5px"></div>
<svg class="abs" style="left:696.3px;top:861.32px" width="12.2" height="12.2" viewBox="0 0 12.2 12.2"><path d="M6.1 0.2V12M0.2 6.1H12" stroke="#8b8d92" stroke-width="1.35"/></svg>
<div class="t" style="letter-spacing:0.053px;left:720.60px;top:861.03px;font-size:13.7px;color:#2f5f8f;">best gym clothes</div>
<div class="abs" style="left:1038.30px;top:859.92px;width:15.80px;height:15.40px;background:#c9dcf3;border-radius:3px"></div>
<div class="t" style="left:1038.30px;width:15.8px;text-align:center;top:862.23px;font-size:10.8px;color:#2f3b52">I</div>
<div class="abs" style="left:1058.90px;top:859.92px;width:15.80px;height:15.40px;background:#f9e28c;border-radius:3px"></div>
<div class="t" style="left:1058.90px;width:15.8px;text-align:center;top:862.23px;font-size:10.8px;color:#4f4210">C</div>
<div class="abs" style="left:1168.90px;top:857.73px;width:22.80px;height:20.00px;background:#fbd48c;border-radius:3px"></div>
<div class="t" style="left:1168.9px;width:22.8px;text-align:center;top:861.03px;font-size:13.7px;color:#3a3d33">54</div>
<div class="t" style="right:686.40px;top:861.03px;font-size:13.7px;color:#3e4046;"><span class="o">1</span>.0K</div>
<svg class="abs" style="left:0;top:0;overflow:visible" width="1" height="1"><path d="M1245.2 873.5 L1246.2 872.8 L1247.2 872.8 L1248.1 872.5 L1249.1 873.6 L1250.1 873.5 L1251.1 873.7 L1252.1 873.6 L1253.0 872.7 L1254.0 873.7 L1255.0 873.1 L1256.0 873.6 L1257.0 873.4 L1257.9 873.2 L1258.9 872.6 L1259.9 872.9 L1260.9 873.9 L1261.9 873.5 L1262.8 873.7 L1263.8 872.5 L1264.8 869.8 L1265.8 861.4 L1266.8 856.0 L1267.7 858.5 L1268.7 866.5 L1269.7 872.5 L1270.7 873.5 L1271.7 872.5 L1272.6 873.1 L1273.6 872.7 L1274.6 873.0 L1275.6 873.2 L1276.6 873.3 L1277.5 873.2 L1278.5 873.4 L1279.5 873.7 L1280.5 872.6 L1281.5 872.6 L1281.5 876.1 L1245.2 876.1Z" fill="url(#gb)" opacity="0.45"/><path d="M1281.5 872.6 L1282.4 872.3 L1283.4 872.8 L1284.4 873.0 L1285.4 872.7 L1286.4 873.7 L1287.3 872.8 L1288.3 873.2 L1289.3 873.6 L1290.3 873.6 L1291.3 873.1 L1292.2 873.5 L1293.2 873.2 L1294.2 872.9 L1295.2 873.3 L1296.2 873.7 L1297.1 873.1 L1298.1 873.5 L1299.1 873.5 L1300.1 873.6 L1301.1 873.3 L1302.0 873.8 L1303.0 872.9 L1304.0 872.4 L1304.0 876.1 L1281.5 876.1Z" fill="url(#go)" opacity="0.45"/><path d="M1245.2 873.5 L1246.2 872.8 L1247.2 872.8 L1248.1 872.5 L1249.1 873.6 L1250.1 873.5 L1251.1 873.7 L1252.1 873.6 L1253.0 872.7 L1254.0 873.7 L1255.0 873.1 L1256.0 873.6 L1257.0 873.4 L1257.9 873.2 L1258.9 872.6 L1259.9 872.9 L1260.9 873.9 L1261.9 873.5 L1262.8 873.7 L1263.8 872.5 L1264.8 869.8 L1265.8 861.4 L1266.8 856.0 L1267.7 858.5 L1268.7 866.5 L1269.7 872.5 L1270.7 873.5 L1271.7 872.5 L1272.6 873.1 L1273.6 872.7 L1274.6 873.0 L1275.6 873.2 L1276.6 873.3 L1277.5 873.2 L1278.5 873.4 L1279.5 873.7 L1280.5 872.6 L1281.5 872.6" fill="none" stroke="#4f86c0" stroke-width="1.1" stroke-linejoin="round"/><path d="M1281.5 872.6 L1282.4 872.3 L1283.4 872.8 L1284.4 873.0 L1285.4 872.7 L1286.4 873.7 L1287.3 872.8 L1288.3 873.2 L1289.3 873.6 L1290.3 873.6 L1291.3 873.1 L1292.2 873.5 L1293.2 873.2 L1294.2 872.9 L1295.2 873.3 L1296.2 873.7 L1297.1 873.1 L1298.1 873.5 L1299.1 873.5 L1300.1 873.6 L1301.1 873.3 L1302.0 873.8 L1303.0 872.9 L1304.0 872.4" fill="none" stroke="#e0a050" stroke-width="1.1" stroke-linejoin="round"/><path d="M1245.2 869.4H1304.0" stroke="#5b7fa8" stroke-width="0.9" stroke-dasharray="1.4 3.4" opacity=".75"/></svg>
<div class="t" style="right:556.10px;top:861.03px;font-size:13.7px;color:#3d9a63;">+<span class="o">1</span><span class="o">1</span>%</div>
<div class="abs" style="left:1379.40px;top:867.02px;width:32.00px;height:1.20px;background:#eef0f2;"></div>
<div class="t" style="right:466.20px;top:861.03px;font-size:13.7px;color:#3e4046;">2.2K</div>
<div class="t" style="right:418.40px;top:861.03px;font-size:13.7px;color:#3e4046;">36K</div>
<div class="t" style="right:372.00px;top:861.03px;font-size:13.7px;color:#3e4046;">37K</div>
<div class="t" style="right:321.20px;top:861.03px;font-size:13.7px;color:#3e4046;">$<span class="o">1</span>.30</div>
<div class="t" style="right:278.20px;top:861.03px;font-size:13.7px;color:#3e4046;"><span class="o">1</span>.03</div>
<div class="abs" style="left:672.00px;top:916.00px;width:984.00px;height:1.00px;background:#eef1f4;"></div>
<div class="abs" style="left:673.80px;top:893.38px;width:13.20px;height:13.20px;background:#fff;border:1px solid #cfd2d6;border-radius:2.5px"></div>
<svg class="abs" style="left:696.3px;top:893.97px" width="12.2" height="12.2" viewBox="0 0 12.2 12.2"><path d="M6.1 0.2V12M0.2 6.1H12" stroke="#8b8d92" stroke-width="1.35"/></svg>
<div class="t" style="letter-spacing:-0.030px;left:720.60px;top:893.68px;font-size:13.7px;color:#2f5f8f;">gym clothes sale</div>
<div class="abs" style="left:1038.30px;top:892.57px;width:15.80px;height:15.40px;background:#f9e28c;border-radius:3px"></div>
<div class="t" style="left:1038.30px;width:15.8px;text-align:center;top:894.88px;font-size:10.8px;color:#4f4210">C</div>
<div class="abs" style="left:1058.90px;top:892.57px;width:15.80px;height:15.40px;background:#f7c7c9;border-radius:3px"></div>
<div class="t" style="left:1058.90px;width:15.8px;text-align:center;top:894.88px;font-size:10.8px;color:#55282b">T</div>
<div class="abs" style="left:1168.90px;top:890.38px;width:22.80px;height:20.00px;background:#80cf9f;border-radius:3px"></div>
<div class="t" style="left:1168.9px;width:22.8px;text-align:center;top:893.68px;font-size:13.7px;color:#3a3d33">3</div>
<div class="t" style="right:686.40px;top:893.68px;font-size:13.7px;color:#3e4046;"><span class="o">1</span>.0K</div>
<svg class="abs" style="left:0;top:0;overflow:visible" width="1" height="1"><path d="M1245.2 906.8 L1246.2 906.1 L1247.2 906.2 L1248.1 905.8 L1249.1 906.6 L1250.1 906.7 L1251.1 906.1 L1252.1 906.2 L1253.0 906.6 L1254.0 906.1 L1255.0 906.5 L1256.0 906.0 L1257.0 906.8 L1257.9 906.7 L1258.9 905.9 L1259.9 906.5 L1260.9 906.0 L1261.9 898.8 L1262.8 891.7 L1263.8 891.4 L1264.8 897.4 L1265.8 904.6 L1266.8 906.8 L1267.7 906.2 L1268.7 906.8 L1269.7 906.6 L1270.7 906.9 L1271.7 906.7 L1272.6 905.8 L1273.6 906.5 L1274.6 905.8 L1275.6 906.4 L1276.6 906.2 L1277.5 905.9 L1278.5 906.1 L1279.5 906.8 L1280.5 906.3 L1281.5 906.2 L1281.5 908.8 L1245.2 908.8Z" fill="url(#gb)" opacity="0.45"/><path d="M1281.5 906.2 L1282.4 906.7 L1283.4 906.9 L1284.4 905.9 L1285.4 906.3 L1286.4 906.7 L1287.3 906.4 L1288.3 906.7 L1289.3 906.0 L1290.3 906.4 L1291.3 906.8 L1292.2 906.0 L1293.2 906.9 L1294.2 906.6 L1295.2 906.9 L1296.2 906.1 L1297.1 906.8 L1298.1 906.3 L1299.1 906.9 L1300.1 906.4 L1301.1 906.1 L1302.0 906.3 L1303.0 906.4 L1304.0 906.4 L1304.0 908.8 L1281.5 908.8Z" fill="url(#go)" opacity="0.45"/><path d="M1245.2 906.8 L1246.2 906.1 L1247.2 906.2 L1248.1 905.8 L1249.1 906.6 L1250.1 906.7 L1251.1 906.1 L1252.1 906.2 L1253.0 906.6 L1254.0 906.1 L1255.0 906.5 L1256.0 906.0 L1257.0 906.8 L1257.9 906.7 L1258.9 905.9 L1259.9 906.5 L1260.9 906.0 L1261.9 898.8 L1262.8 891.7 L1263.8 891.4 L1264.8 897.4 L1265.8 904.6 L1266.8 906.8 L1267.7 906.2 L1268.7 906.8 L1269.7 906.6 L1270.7 906.9 L1271.7 906.7 L1272.6 905.8 L1273.6 906.5 L1274.6 905.8 L1275.6 906.4 L1276.6 906.2 L1277.5 905.9 L1278.5 906.1 L1279.5 906.8 L1280.5 906.3 L1281.5 906.2" fill="none" stroke="#4f86c0" stroke-width="1.1" stroke-linejoin="round"/><path d="M1281.5 906.2 L1282.4 906.7 L1283.4 906.9 L1284.4 905.9 L1285.4 906.3 L1286.4 906.7 L1287.3 906.4 L1288.3 906.7 L1289.3 906.0 L1290.3 906.4 L1291.3 906.8 L1292.2 906.0 L1293.2 906.9 L1294.2 906.6 L1295.2 906.9 L1296.2 906.1 L1297.1 906.8 L1298.1 906.3 L1299.1 906.9 L1300.1 906.4 L1301.1 906.1 L1302.0 906.3 L1303.0 906.4 L1304.0 906.4" fill="none" stroke="#e0a050" stroke-width="1.1" stroke-linejoin="round"/><path d="M1245.2 902.6H1304.0" stroke="#5b7fa8" stroke-width="0.9" stroke-dasharray="1.4 3.4" opacity=".75"/></svg>
<div class="t" style="right:556.10px;top:893.68px;font-size:13.7px;color:#3d9a63;">+<span class="o">1</span>5%</div>
<div class="abs" style="left:1379.40px;top:897.07px;width:19.20px;height:5.60px;background:#2f80d2;"></div>
<div class="abs" style="left:1398.60px;top:897.07px;width:12.80px;height:5.60px;background:#f1c829;"></div>
<div class="t" style="right:466.20px;top:893.68px;font-size:13.7px;color:#3e4046;">2.8K</div>
<div class="t" style="right:418.40px;top:893.68px;font-size:13.7px;color:#3e4046;">2.0K</div>
<div class="t" style="right:372.00px;top:893.68px;font-size:13.7px;color:#3e4046;">2.3K</div>
<div class="t" style="right:321.20px;top:893.68px;font-size:13.7px;color:#3e4046;">$0.90</div>
<div class="t" style="right:278.20px;top:893.68px;font-size:13.7px;color:#b9bbbf;">N/A</div>
<div class="abs" style="left:672.00px;top:948.65px;width:984.00px;height:1.00px;background:#eef1f4;"></div>
<div class="abs" style="left:673.80px;top:926.02px;width:13.20px;height:13.20px;background:#fff;border:1px solid #cfd2d6;border-radius:2.5px"></div>
<svg class="abs" style="left:696.3px;top:926.62px" width="12.2" height="12.2" viewBox="0 0 12.2 12.2"><path d="M6.1 0.2V12M0.2 6.1H12" stroke="#8b8d92" stroke-width="1.35"/></svg>
<div class="t" style="letter-spacing:-0.005px;left:720.60px;top:926.33px;font-size:13.7px;color:#2f5f8f;">plus size gym clothes</div>
<div class="abs" style="left:1038.30px;top:925.22px;width:15.80px;height:15.40px;background:#c9dcf3;border-radius:3px"></div>
<div class="t" style="left:1038.30px;width:15.8px;text-align:center;top:927.52px;font-size:10.8px;color:#2f3b52">I</div>
<div class="abs" style="left:1058.90px;top:925.22px;width:15.80px;height:15.40px;background:#f9e28c;border-radius:3px"></div>
<div class="t" style="left:1058.90px;width:15.8px;text-align:center;top:927.52px;font-size:10.8px;color:#4f4210">C</div>
<div class="abs" style="left:1079.50px;top:925.22px;width:15.80px;height:15.40px;background:#f7c7c9;border-radius:3px"></div>
<div class="t" style="left:1079.50px;width:15.8px;text-align:center;top:927.52px;font-size:10.8px;color:#55282b">T</div>
<div class="abs" style="left:1168.90px;top:923.02px;width:22.80px;height:20.00px;background:#c9e0ae;border-radius:3px"></div>
<div class="t" style="left:1168.9px;width:22.8px;text-align:center;top:926.33px;font-size:13.7px;color:#3a3d33">22</div>
<div class="t" style="right:686.40px;top:926.33px;font-size:13.7px;color:#3e4046;"><span class="o">1</span>.0K</div>
<svg class="abs" style="left:0;top:0;overflow:visible" width="1" height="1"><path d="M1245.2 928.5 L1246.2 932.3 L1247.2 929.4 L1248.1 931.7 L1249.1 924.9 L1250.1 926.1 L1251.1 921.3 L1252.1 922.4 L1253.0 923.7 L1254.0 926.2 L1255.0 931.4 L1256.0 931.0 L1257.0 929.5 L1257.9 931.3 L1258.9 931.3 L1259.9 931.5 L1260.9 928.9 L1261.9 928.9 L1262.8 929.2 L1263.8 931.5 L1264.8 928.7 L1265.8 930.3 L1266.8 931.4 L1267.7 930.5 L1268.7 930.7 L1269.7 932.1 L1270.7 930.1 L1271.7 930.9 L1272.6 930.1 L1273.6 928.6 L1274.6 929.8 L1275.6 930.8 L1276.6 928.9 L1277.5 928.4 L1278.5 930.4 L1279.5 928.6 L1280.5 932.3 L1281.5 931.8 L1281.5 941.4 L1245.2 941.4Z" fill="url(#gb)" opacity="1"/><path d="M1281.5 931.8 L1282.4 931.7 L1283.4 928.6 L1284.4 929.6 L1285.4 929.5 L1286.4 931.2 L1287.3 928.7 L1288.3 925.7 L1289.3 928.1 L1290.3 928.0 L1291.3 928.9 L1292.2 928.5 L1293.2 928.7 L1294.2 930.1 L1295.2 930.8 L1296.2 930.4 L1297.1 931.7 L1298.1 928.6 L1299.1 931.0 L1300.1 931.4 L1301.1 931.1 L1302.0 929.1 L1303.0 931.1 L1304.0 928.7 L1304.0 941.4 L1281.5 941.4Z" fill="url(#go)" opacity="1"/><path d="M1245.2 928.5 L1246.2 932.3 L1247.2 929.4 L1248.1 931.7 L1249.1 924.9 L1250.1 926.1 L1251.1 921.3 L1252.1 922.4 L1253.0 923.7 L1254.0 926.2 L1255.0 931.4 L1256.0 931.0 L1257.0 929.5 L1257.9 931.3 L1258.9 931.3 L1259.9 931.5 L1260.9 928.9 L1261.9 928.9 L1262.8 929.2 L1263.8 931.5 L1264.8 928.7 L1265.8 930.3 L1266.8 931.4 L1267.7 930.5 L1268.7 930.7 L1269.7 932.1 L1270.7 930.1 L1271.7 930.9 L1272.6 930.1 L1273.6 928.6 L1274.6 929.8 L1275.6 930.8 L1276.6 928.9 L1277.5 928.4 L1278.5 930.4 L1279.5 928.6 L1280.5 932.3 L1281.5 931.8" fill="none" stroke="#4f86c0" stroke-width="1.1" stroke-linejoin="round"/><path d="M1281.5 931.8 L1282.4 931.7 L1283.4 928.6 L1284.4 929.6 L1285.4 929.5 L1286.4 931.2 L1287.3 928.7 L1288.3 925.7 L1289.3 928.1 L1290.3 928.0 L1291.3 928.9 L1292.2 928.5 L1293.2 928.7 L1294.2 930.1 L1295.2 930.8 L1296.2 930.4 L1297.1 931.7 L1298.1 928.6 L1299.1 931.0 L1300.1 931.4 L1301.1 931.1 L1302.0 929.1 L1303.0 931.1 L1304.0 928.7" fill="none" stroke="#e0a050" stroke-width="1.1" stroke-linejoin="round"/><path d="M1245.2 929.9H1304.0" stroke="#5b7fa8" stroke-width="0.9" stroke-dasharray="1.4 3.4" opacity=".75"/></svg>
<div class="t" style="right:556.10px;top:926.33px;font-size:13.7px;color:#3d9a63;">+<span class="o">1</span>3%</div>
<div class="abs" style="left:1379.40px;top:929.72px;width:24.00px;height:5.60px;background:#2f80d2;"></div>
<div class="abs" style="left:1403.40px;top:929.72px;width:8.00px;height:5.60px;background:#f1c829;"></div>
<div class="t" style="right:466.20px;top:926.33px;font-size:13.7px;color:#3e4046;">2.6K</div>
<div class="t" style="right:418.40px;top:926.33px;font-size:13.7px;color:#3e4046;">6.5K</div>
<div class="t" style="right:372.00px;top:926.33px;font-size:13.7px;color:#3e4046;">6.8K</div>
<div class="t" style="right:321.20px;top:926.33px;font-size:13.7px;color:#3e4046;">$0.80</div>
<div class="t" style="right:278.20px;top:926.33px;font-size:13.7px;color:#3e4046;"><span class="o">1</span>.38</div>
<div class="abs" style="left:673.80px;top:958.67px;width:13.20px;height:13.20px;background:#fff;border:1px solid #cfd2d6;border-radius:2.5px"></div>
<svg class="abs" style="left:696.3px;top:959.27px" width="12.2" height="12.2" viewBox="0 0 12.2 12.2"><path d="M6.1 0.2V12M0.2 6.1H12" stroke="#8b8d92" stroke-width="1.35"/></svg>
<div class="t" style="letter-spacing:0.033px;left:720.60px;top:958.98px;font-size:13.7px;color:#2f5f8f;">gym clothes women</div>
<div class="abs" style="left:1038.30px;top:957.87px;width:15.80px;height:15.40px;background:#c9dcf3;border-radius:3px"></div>
<div class="t" style="left:1038.30px;width:15.8px;text-align:center;top:960.17px;font-size:10.8px;color:#2f3b52">I</div>
<div class="abs" style="left:1058.90px;top:957.87px;width:15.80px;height:15.40px;background:#f9e28c;border-radius:3px"></div>
<div class="t" style="left:1058.90px;width:15.8px;text-align:center;top:960.17px;font-size:10.8px;color:#4f4210">C</div>
<div class="abs" style="left:1168.90px;top:955.67px;width:22.80px;height:20.00px;background:#f9b99a;border-radius:3px"></div>
<div class="t" style="left:1168.9px;width:22.8px;text-align:center;top:958.98px;font-size:13.7px;color:#3a3d33">76</div>
<div class="t" style="right:686.40px;top:958.98px;font-size:13.7px;color:#3e4046;">900</div>
<svg class="abs" style="left:0;top:0;overflow:visible" width="1" height="1"><path d="M1245.2 970.0 L1246.2 969.7 L1247.2 969.9 L1248.1 969.8 L1249.1 969.9 L1250.1 969.3 L1251.1 970.2 L1252.1 969.3 L1253.0 970.8 L1254.0 970.1 L1255.0 970.1 L1256.0 970.5 L1257.0 969.1 L1257.9 970.1 L1258.9 969.0 L1259.9 968.6 L1260.9 970.2 L1261.9 968.7 L1262.8 968.9 L1263.8 964.8 L1264.8 959.5 L1265.8 959.5 L1266.8 966.3 L1267.7 970.1 L1268.7 970.3 L1269.7 970.1 L1270.7 970.2 L1271.7 969.0 L1272.6 970.0 L1273.6 969.8 L1274.6 969.3 L1275.6 968.6 L1276.6 970.2 L1277.5 970.8 L1278.5 968.5 L1279.5 968.9 L1280.5 969.0 L1281.5 969.6 L1281.5 974.1 L1245.2 974.1Z" fill="url(#gb)" opacity="0.45"/><path d="M1281.5 969.6 L1282.4 970.3 L1283.4 970.5 L1284.4 970.1 L1285.4 969.7 L1286.4 970.7 L1287.3 967.2 L1288.3 967.1 L1289.3 968.8 L1290.3 966.8 L1291.3 967.7 L1292.2 966.6 L1293.2 967.7 L1294.2 966.9 L1295.2 969.8 L1296.2 969.4 L1297.1 969.7 L1298.1 970.8 L1299.1 970.5 L1300.1 970.3 L1301.1 969.9 L1302.0 970.0 L1303.0 969.6 L1304.0 969.3 L1304.0 974.1 L1281.5 974.1Z" fill="url(#go)" opacity="0.45"/><path d="M1245.2 970.0 L1246.2 969.7 L1247.2 969.9 L1248.1 969.8 L1249.1 969.9 L1250.1 969.3 L1251.1 970.2 L1252.1 969.3 L1253.0 970.8 L1254.0 970.1 L1255.0 970.1 L1256.0 970.5 L1257.0 969.1 L1257.9 970.1 L1258.9 969.0 L1259.9 968.6 L1260.9 970.2 L1261.9 968.7 L1262.8 968.9 L1263.8 964.8 L1264.8 959.5 L1265.8 959.5 L1266.8 966.3 L1267.7 970.1 L1268.7 970.3 L1269.7 970.1 L1270.7 970.2 L1271.7 969.0 L1272.6 970.0 L1273.6 969.8 L1274.6 969.3 L1275.6 968.6 L1276.6 970.2 L1277.5 970.8 L1278.5 968.5 L1279.5 968.9 L1280.5 969.0 L1281.5 969.6" fill="none" stroke="#4f86c0" stroke-width="1.1" stroke-linejoin="round"/><path d="M1281.5 969.6 L1282.4 970.3 L1283.4 970.5 L1284.4 970.1 L1285.4 969.7 L1286.4 970.7 L1287.3 967.2 L1288.3 967.1 L1289.3 968.8 L1290.3 966.8 L1291.3 967.7 L1292.2 966.6 L1293.2 967.7 L1294.2 966.9 L1295.2 969.8 L1296.2 969.4 L1297.1 969.7 L1298.1 970.8 L1299.1 970.5 L1300.1 970.3 L1301.1 969.9 L1302.0 970.0 L1303.0 969.6 L1304.0 969.3" fill="none" stroke="#e0a050" stroke-width="1.1" stroke-linejoin="round"/><path d="M1245.2 965.9H1304.0" stroke="#5b7fa8" stroke-width="0.9" stroke-dasharray="1.4 3.4" opacity=".75"/></svg>
<div class="t" style="right:556.10px;top:958.98px;font-size:13.7px;color:#3d9a63;">+<span class="o">1</span><span class="o">1</span>%</div>
<div class="abs" style="left:1379.40px;top:962.37px;width:16.64px;height:5.60px;background:#2f80d2;"></div>
<div class="abs" style="left:1396.04px;top:962.37px;width:15.36px;height:5.60px;background:#f1c829;"></div>
<div class="t" style="right:466.20px;top:958.98px;font-size:13.7px;color:#3e4046;">7.4K</div>
<div class="t" style="right:418.40px;top:958.98px;font-size:13.7px;color:#3e4046;"><span class="o">1</span>6K</div>
<div class="t" style="right:372.00px;top:958.98px;font-size:13.7px;color:#3e4046;"><span class="o">1</span>6K</div>
<div class="t" style="right:321.20px;top:958.98px;font-size:13.7px;color:#3e4046;">$<span class="o">1</span>.30</div>
<div class="t" style="right:278.20px;top:958.98px;font-size:13.7px;color:#3e4046;">0.9<span class="o">1</span></div>
</div>
<svg class="abs" style="left:0;top:0" width="1920" height="1080" viewBox="0 0 1920 1080"><g opacity=".25"><rect x="277.8" y="142.1" width="101.3" height="49.3" rx="6" fill="none" stroke="#000" stroke-width="8"/><rect x="719.2" y="853.2" width="126.8" height="48.2" rx="6" fill="none" stroke="#000" stroke-width="8"/><polygon points="391.4,205.4 451.8,225.4 429.1,243.1 411.4,265.8" fill="#000" stroke="#000" stroke-width="9" stroke-linejoin="round"/><polygon points="430.9,237.8 456.3,263.3 449.3,270.3 423.8,244.9" fill="#000" stroke="#000" stroke-width="4.4" stroke-linejoin="round"/><polygon points="856.7,832.5 916.6,812.7 894.1,795.1 876.5,772.6" fill="#000" stroke="#000" stroke-width="9" stroke-linejoin="round"/><polygon points="895.8,800.4 919.9,776.4 912.8,769.3 888.8,793.4" fill="#000" stroke="#000" stroke-width="4.4" stroke-linejoin="round"/></g><rect x="270.3" y="134.4" width="101.3" height="49.3" rx="6" fill="none" stroke="#06e487" stroke-width="8"/><rect x="711.5" y="845.2" width="126.8" height="48.2" rx="6" fill="none" stroke="#06e487" stroke-width="8"/><polygon points="383.8,197.8 444.2,217.8 421.5,235.5 403.8,258.2" fill="#06e487" stroke="#06e487" stroke-width="9" stroke-linejoin="round"/><polygon points="423.3,230.2 448.7,255.7 441.7,262.7 416.2,237.3" fill="#06e487" stroke="#06e487" stroke-width="4.4" stroke-linejoin="round"/><polygon points="849.2,840.0 909.1,820.2 886.6,802.6 869.0,780.1" fill="#06e487" stroke="#06e487" stroke-width="9" stroke-linejoin="round"/><polygon points="888.3,807.9 912.4,783.9 905.3,776.8 881.3,800.9" fill="#06e487" stroke="#06e487" stroke-width="4.4" stroke-linejoin="round"/></svg>
<svg class="abs" style="left:0;top:1020px" width="1920" height="60" viewBox="0 1020 1920 60"><g fill="none" stroke="#20df8e" stroke-width="3.3"><path d="M27.55 1040 V1060"/><path d="M27.55 1041.55 H33.6 a3.9 3.9 0 0 1 0 7.8 H27.55"/><path d="M27.55 1049.35 H34.7 a4.5 4.5 0 0 1 0 9 H27.55"/><circle cx="51.8" cy="1052" r="6.35"/><path d="M58.95 1044 V1060"/><path d="M64.4 1045.95 H77.6 L66.2 1058.3 H78.8"/><path d="M92.44 1046.29 A6.5 6.5 0 1 0 94.41 1055.39 L99.19 1048.21 A6.5 6.5 0 1 1 101.16 1057.31" stroke-linecap="round"/><path d="M117.65 1043.6 V1059.9 M117.65 1051 a5.725 5.725 0 0 1 11.45 0 V1059.9 M129.1 1051 a5.725 5.725 0 0 1 11.45 0 V1059.9"/></g><text x="1740.6" y="1056.5" font-family="Liberation Serif" font-weight="bold" font-size="26" fill="#fff" stroke="#fff" stroke-width="1.1" stroke-linejoin="round" textLength="101.6" lengthAdjust="spacingAndGlyphs">brighton</text><text x="1843.3" y="1056.5" font-family="Liberation Serif" font-weight="bold" font-size="26" fill="#fff" stroke="#fff" stroke-width="1.1" stroke-linejoin="round" textLength="53.4" lengthAdjust="spacingAndGlyphs">SEO.</text></svg></body></html>
